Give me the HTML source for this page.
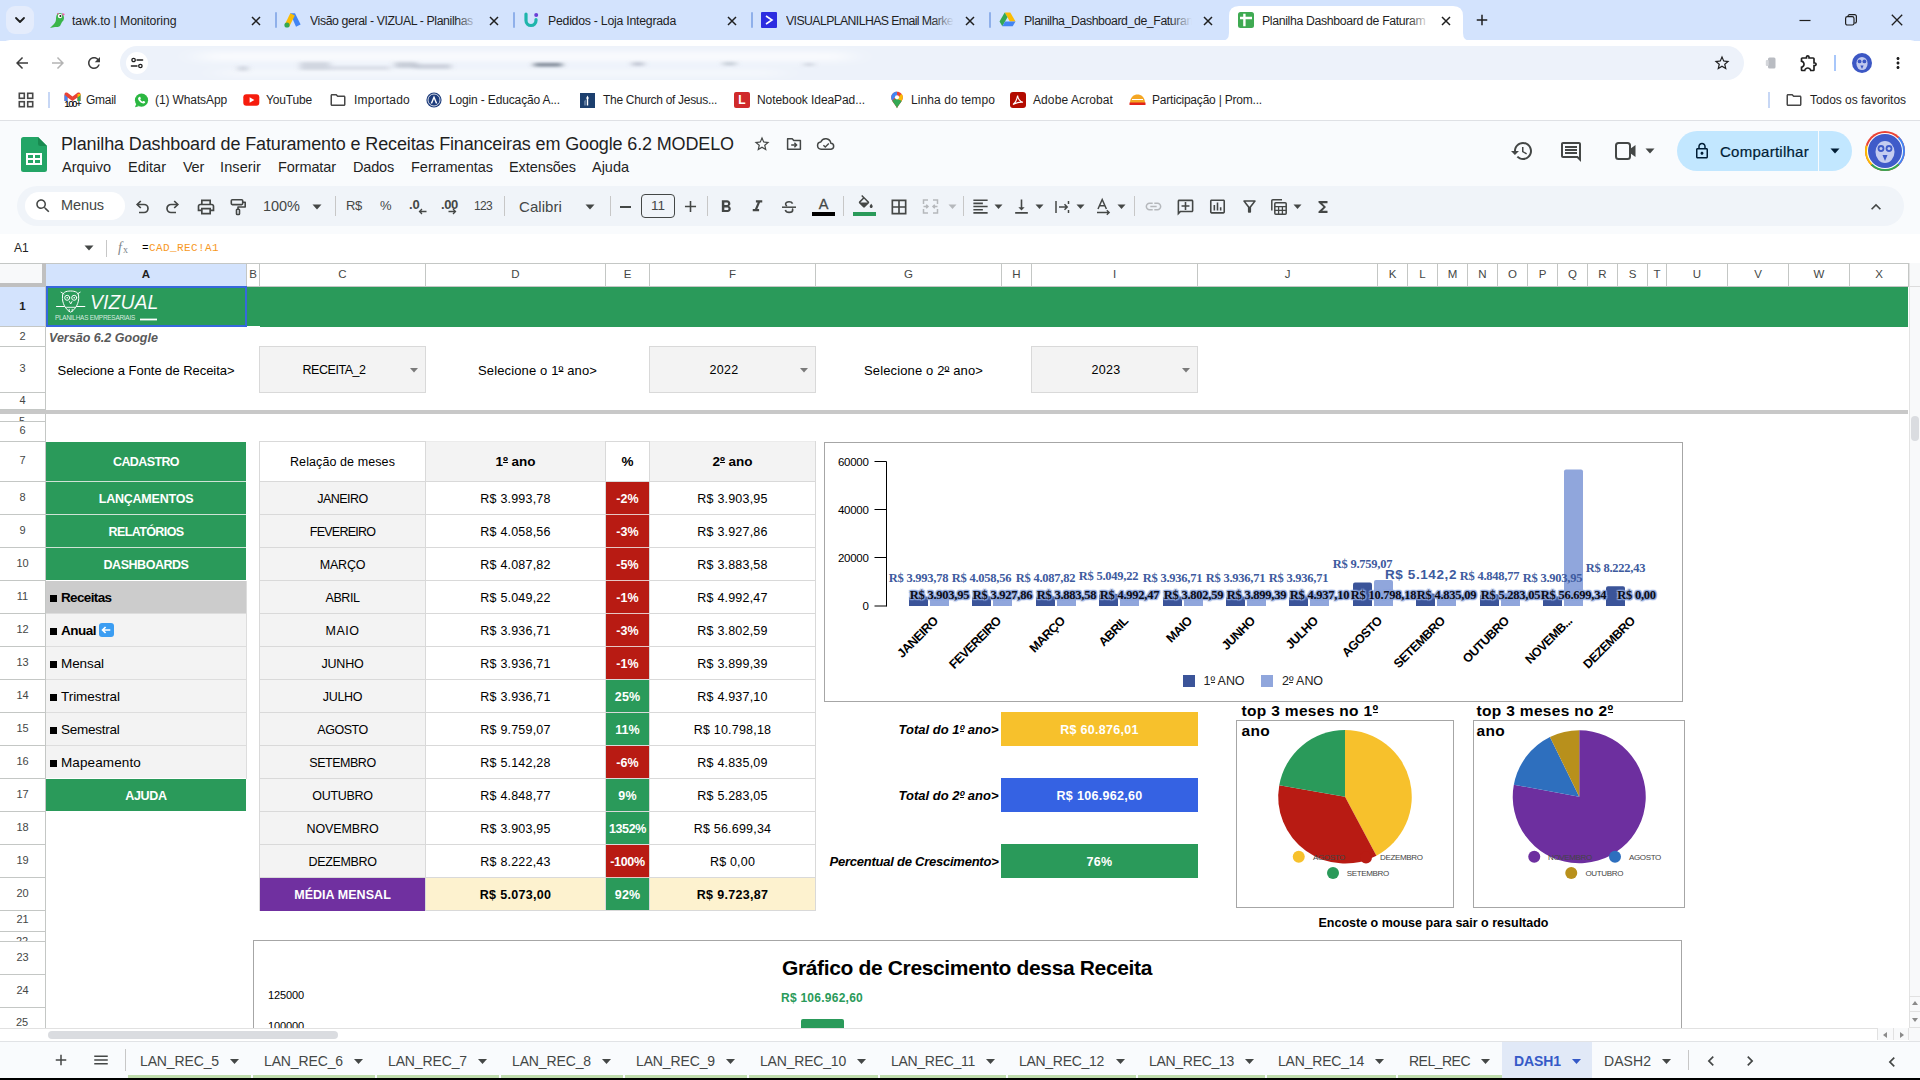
<!DOCTYPE html>
<html><head><meta charset="utf-8"><title>Planilha Dashboard</title><style>
html,body{margin:0;padding:0;}
body{width:1920px;height:1080px;overflow:hidden;background:#fff;position:relative;font-family:"Liberation Sans",sans-serif;}
.a{position:absolute;box-sizing:border-box;overflow:hidden;}
.t{position:absolute;white-space:nowrap;}
svg.a{overflow:visible;}
</style></head><body>
<div class="a" style="left:0px;top:0px;width:1920px;height:41px;background:#d3e3fd;"></div>
<div class="a" style="left:0px;top:40px;width:1920px;height:80px;background:#ffffff;border-radius:10px 10px 0 0;"></div>
<div class="a" style="left:6px;top:6px;width:28px;height:28px;background:#e4ecfc;border-radius:9px;"></div>
<svg class="a" style="left:13px;top:14px;" width="14" height="12" viewBox="0 0 14 12"><path d="M3 4 L7 8 L11 4" fill="none" stroke="#1f1f1f" stroke-width="1.8" stroke-linecap="round" stroke-linejoin="round"/></svg>
<svg class="a" style="left:1221px;top:6px;" width="250" height="35" viewBox="0 0 250 35"><path d="M0 35 Q8 35 8 27 L8 10 Q8 0 18 0 L232 0 Q242 0 242 10 L242 27 Q242 35 250 35 Z" fill="#ffffff"/></svg>
<div class="a" style="left:72px;top:8px;width:168px;height:26px;"><span class="t" style="left:0;top:6px;font:400 12.300px/15px 'Liberation Sans',sans-serif;letter-spacing:-0.1px;color:#1f1f1f">tawk.to | Monitoring</span></div>
<div class="a" style="left:218px;top:8px;width:22px;height:26px;background:linear-gradient(90deg,rgba(211,227,253,0),#d3e3fd);"></div>
<svg class="a" style="left:251px;top:15.5px;" width="10" height="10" viewBox="0 0 10 10"><path d="M1 1 L9 9 M9 1 L1 9" stroke="#1f1f1f" stroke-width="1.500" fill="none"/></svg>
<div class="a" style="left:275px;top:12px;width:1.5px;height:16px;background:#8fb0ea;border-radius:1px;"></div>
<div class="a" style="left:310px;top:8px;width:168px;height:26px;"><span class="t" style="left:0;top:6px;font:400 12.300px/15px 'Liberation Sans',sans-serif;letter-spacing:-0.4px;color:#1f1f1f">Visão geral - VIZUAL - Planilhas</span></div>
<div class="a" style="left:456px;top:8px;width:22px;height:26px;background:linear-gradient(90deg,rgba(211,227,253,0),#d3e3fd);"></div>
<svg class="a" style="left:489px;top:15.5px;" width="10" height="10" viewBox="0 0 10 10"><path d="M1 1 L9 9 M9 1 L1 9" stroke="#1f1f1f" stroke-width="1.500" fill="none"/></svg>
<div class="a" style="left:513px;top:12px;width:1.5px;height:16px;background:#8fb0ea;border-radius:1px;"></div>
<div class="a" style="left:548px;top:8px;width:168px;height:26px;"><span class="t" style="left:0;top:6px;font:400 12.300px/15px 'Liberation Sans',sans-serif;letter-spacing:-0.25px;color:#1f1f1f">Pedidos - Loja Integrada</span></div>
<div class="a" style="left:694px;top:8px;width:22px;height:26px;background:linear-gradient(90deg,rgba(211,227,253,0),#d3e3fd);"></div>
<svg class="a" style="left:727px;top:15.5px;" width="10" height="10" viewBox="0 0 10 10"><path d="M1 1 L9 9 M9 1 L1 9" stroke="#1f1f1f" stroke-width="1.500" fill="none"/></svg>
<div class="a" style="left:751px;top:12px;width:1.5px;height:16px;background:#8fb0ea;border-radius:1px;"></div>
<div class="a" style="left:786px;top:8px;width:168px;height:26px;"><span class="t" style="left:0;top:6px;font:400 12.300px/15px 'Liberation Sans',sans-serif;letter-spacing:-0.6px;color:#1f1f1f">VISUALPLANILHAS Email Marke</span></div>
<div class="a" style="left:932px;top:8px;width:22px;height:26px;background:linear-gradient(90deg,rgba(211,227,253,0),#d3e3fd);"></div>
<svg class="a" style="left:965px;top:15.5px;" width="10" height="10" viewBox="0 0 10 10"><path d="M1 1 L9 9 M9 1 L1 9" stroke="#1f1f1f" stroke-width="1.500" fill="none"/></svg>
<div class="a" style="left:989px;top:12px;width:1.5px;height:16px;background:#8fb0ea;border-radius:1px;"></div>
<div class="a" style="left:1024px;top:8px;width:168px;height:26px;"><span class="t" style="left:0;top:6px;font:400 12.300px/15px 'Liberation Sans',sans-serif;letter-spacing:-0.4px;color:#1f1f1f">Planilha_Dashboard_de_Faturan</span></div>
<div class="a" style="left:1170px;top:8px;width:22px;height:26px;background:linear-gradient(90deg,rgba(211,227,253,0),#d3e3fd);"></div>
<svg class="a" style="left:1203px;top:15.5px;" width="10" height="10" viewBox="0 0 10 10"><path d="M1 1 L9 9 M9 1 L1 9" stroke="#1f1f1f" stroke-width="1.500" fill="none"/></svg>
<div class="a" style="left:1262px;top:8px;width:168px;height:26px;"><span class="t" style="left:0;top:6px;font:400 12.300px/15px 'Liberation Sans',sans-serif;letter-spacing:-0.35px;color:#1f1f1f">Planilha Dashboard de Faturam</span></div>
<div class="a" style="left:1408px;top:8px;width:22px;height:26px;background:linear-gradient(90deg,rgba(255,255,255,0),#ffffff);"></div>
<svg class="a" style="left:1441px;top:15.5px;" width="10" height="10" viewBox="0 0 10 10"><path d="M1 1 L9 9 M9 1 L1 9" stroke="#1f1f1f" stroke-width="1.500" fill="none"/></svg>
<svg class="a" style="left:1472.5px;top:11.0px;" width="18" height="18" viewBox="0 0 24 24"><path d="M19 13h-6v6h-2v-6H5v-2h6V5h2v6h6v2z" fill="#1f1f1f" /></svg>
<svg class="a" style="left:48px;top:11px;" width="18" height="18" viewBox="0 0 18 18"><path d="M11 2c3 0 5 2 5 5 0 2-1 3-2 4l-2 4c-1 1-3 1-5 1l-5 1 4-4c1-1 2-3 2-5 0-3 1-6 3-6z" fill="#3ab54a"/><circle cx="12" cy="5" r="2.2" fill="#fff"/><circle cx="12.4" cy="5" r="1" fill="#222"/><path d="M14 2l3 1-2 2z" fill="#ef5ba1"/><path d="M9 2l2 0-1 2z" fill="#ef5ba1"/></svg>
<svg class="a" style="left:284px;top:12px;" width="18" height="16" viewBox="0 0 18 16"><path d="M6.2 1.2 L11 1.2 L16.6 12.6 L12 14.8 Z" fill="#4285f4"/><path d="M6.3 1.3 L10.8 3.4 L5.2 14.8 L0.8 12.4 Z" fill="#fbbc04"/><circle cx="3" cy="13" r="2.6" fill="#34a853"/></svg>
<svg class="a" style="left:523px;top:12px;" width="16" height="16" viewBox="0 0 16 16"><path d="M3 2 v6.5 a5 5 0 0 0 10 0 v-1" fill="none" stroke="#1fb5ac" stroke-width="3.2" stroke-linecap="round"/><circle cx="13.2" cy="3" r="2" fill="#6a3fd6"/></svg>
<div class="a" style="left:761px;top:12px;width:16px;height:16px;background:#2d2de0;border-radius:1px;"></div>
<svg class="a" style="left:761px;top:12px;" width="16" height="16" viewBox="0 0 16 16"><path d="M5 4 L11 8 L5 12" fill="none" stroke="#fff" stroke-width="1.6"/></svg>
<svg class="a" style="left:999px;top:12px;" width="17" height="15" viewBox="0 0 17 15"><path d="M5.7 0.5 h5.6 l5.2 9 h-5.6z" fill="#fbbc04"/><path d="M5.7 0.5 L0.5 9.5 l2.8 4.8 L8.5 5.3z" fill="#34a853"/><path d="M3.3 14.3 h10.4 l2.8-4.8 H6.1z" fill="#4285f4"/><path d="M11.3 0.5 L8.5 5.3 l2.4 4.2 h5.6z" fill="#ea4335" opacity=".0"/></svg>
<div class="a" style="left:1238px;top:12px;width:16px;height:16px;background:#3faa52;border-radius:2.500px;"></div>
<svg class="a" style="left:1238px;top:12px;" width="16" height="16" viewBox="0 0 16 16"><path d="M2 6 H14 M6.400 1.800 V14.200" fill="none" stroke="#fff" stroke-width="2.400"/></svg>
<svg class="a" style="left:1799px;top:14px;" width="12" height="12" viewBox="0 0 12 12"><path d="M0.5 6.5h11" stroke="#1f1f1f" stroke-width="1.2"/></svg>
<svg class="a" style="left:1845px;top:14px;" width="12" height="12" viewBox="0 0 12 12"><rect x="0.6" y="2.6" width="8.4" height="8.4" rx="1.8" fill="none" stroke="#1f1f1f" stroke-width="1.2"/><path d="M3 2.4 V2.2 a1.6 1.6 0 0 1 1.6-1.6 H9.6 a1.8 1.8 0 0 1 1.8 1.8 V7.6 a1.6 1.6 0 0 1-1.6 1.6 H9.4" fill="none" stroke="#1f1f1f" stroke-width="1.2"/></svg>
<svg class="a" style="left:1891px;top:14px;" width="12" height="12" viewBox="0 0 12 12"><path d="M0.8 0.8 L11.2 11.2 M11.2 0.8 L0.8 11.2" stroke="#1f1f1f" stroke-width="1.3"/></svg>
<svg class="a" style="left:13.0px;top:54.0px;" width="18" height="18" viewBox="0 0 24 24"><path d="M20 11H7.83l5.59-5.59L12 4l-8 8 8 8 1.41-1.41L7.83 13H20v-2z" fill="#3c3c3c" /></svg>
<svg class="a" style="left:49.0px;top:54.0px;" width="18" height="18" viewBox="0 0 24 24"><path d="M12 4l-1.41 1.41L16.17 11H4v2h12.17l-5.58 5.59L12 20l8-8z" fill="#b4b4b4" /></svg>
<svg class="a" style="left:85.0px;top:54.0px;" width="18" height="18" viewBox="0 0 24 24"><path d="M17.65 6.35C16.2 4.9 14.21 4 12 4c-4.42 0-7.99 3.58-7.99 8s3.57 8 7.99 8c3.73 0 6.84-2.55 7.73-6h-2.08c-.82 2.33-3.04 4-5.65 4-3.31 0-6-2.69-6-6s2.69-6 6-6c1.66 0 3.14.69 4.22 1.78L13 11h7V4l-2.35 2.35z" fill="#3c3c3c" /></svg>
<div class="a" style="left:120px;top:46px;width:1624px;height:34px;background:#edf2fa;border-radius:17px;"></div>
<div class="a" style="left:126px;top:52px;width:22px;height:22px;background:#ffffff;border-radius:11px;"></div>
<svg class="a" style="left:130px;top:56px;" width="14" height="14" viewBox="0 0 14 14"><circle cx="3.6" cy="4" r="1.7" fill="none" stroke="#1f1f1f" stroke-width="1.3"/><path d="M7 4h5.6" stroke="#1f1f1f" stroke-width="1.4" stroke-linecap="round"/><circle cx="10.4" cy="10" r="1.7" fill="none" stroke="#1f1f1f" stroke-width="1.3"/><path d="M1.4 10h5.6" stroke="#1f1f1f" stroke-width="1.4" stroke-linecap="round"/></svg>
<svg class="a" style="left:160px;top:50px;" width="1000" height="28" viewBox="0 0 1000 28"><defs><filter id="bl" x="-5%" y="-80%" width="110%" height="260%"><feGaussianBlur stdDeviation="3 1.600"/></filter><filter id="bl2" x="-5%" y="-80%" width="110%" height="260%"><feGaussianBlur stdDeviation="14 3"/></filter></defs><g filter="url(#bl2)" fill="#ffffff"><rect x="40" y="2" width="650" height="9" opacity=".75"/><rect x="60" y="20" width="560" height="6" opacity=".55"/></g><g filter="url(#bl)" fill="#8b93a3"><rect x="78" y="16" width="10" height="5" opacity=".30"/><rect x="140" y="12" width="30" height="8" opacity=".30"/><rect x="170" y="16" width="60" height="4" opacity=".22"/><rect x="235" y="12" width="22" height="6" opacity=".40"/><rect x="255" y="14" width="36" height="5" opacity=".35"/><rect x="374" y="13" width="28" height="3.500" fill="#5b6675" opacity=".8"/><rect x="472" y="12" width="12" height="4" opacity=".45"/><rect x="563" y="12" width="13" height="3.500" opacity=".42"/><rect x="644" y="13" width="10" height="3" opacity=".32"/></g></svg>
<svg class="a" style="left:1712.5px;top:54.0px;" width="18" height="18" viewBox="0 0 24 24"><path d="M22 9.24l-7.19-.62L12 2 9.19 8.63 2 9.24l5.46 4.73L5.82 21 12 17.27 18.18 21l-1.63-7.03L22 9.24zM12 15.4l-3.76 2.27 1-4.28-3.32-2.88 4.38-.38L12 6.1l1.71 4.04 4.38.38-3.32 2.88 1 4.28L12 15.4z" fill="#1f1f1f" /></svg>
<svg class="a" style="left:1765px;top:56px;" width="12" height="14" viewBox="0 0 12 14"><rect x="3" y="1.5" width="7.5" height="11" rx="1.5" fill="#b9bcc2"/><rect x="0.8" y="4" width="3" height="6" rx="1" fill="#d4d6da"/></svg>
<svg class="a" style="left:1798.5px;top:53.0px;" width="20" height="20" viewBox="0 0 24 24"><path d="M10.5 4.5c.28 0 .5.22.5.5v2h6v6h2c.28 0 .5.22.5.5s-.22.5-.5.5h-2v6h-2.12c-.68-1.75-2.39-3-4.38-3s-3.7 1.25-4.38 3H4v-2.12c1.75-.68 3-2.39 3-4.38 0-1.99-1.24-3.7-2.99-4.38L4 7h6V5c0-.28.22-.5.5-.5m0-2C9.12 2.5 8 3.62 8 5H4c-1.1 0-1.99.9-1.99 2v3.8h.29c1.49 0 2.7 1.21 2.7 2.7s-1.21 2.7-2.7 2.7H2V20c0 1.1.9 2 2 2h3.8v-.3c0-1.49 1.21-2.7 2.7-2.7s2.7 1.21 2.7 2.7v.3H17c1.1 0 2-.9 2-2v-4c1.38 0 2.5-1.12 2.5-2.5S20.38 11 19 11V7c0-1.1-.9-2-2-2h-4c0-1.38-1.12-2.5-2.5-2.5z" fill="#1f1f1f" /></svg>
<div class="a" style="left:1834px;top:55px;width:1.5px;height:16px;background:#a8c7fa;"></div>
<svg class="a" style="left:1852px;top:53px;" width="20" height="20" viewBox="0 0 20 20"><circle cx="10" cy="10" r="10" fill="#3c57c4"/><ellipse cx="10" cy="10.5" rx="5.6" ry="6.6" fill="#cfd6f3" opacity=".9"/><circle cx="7.6" cy="8.4" r="1.9" fill="#3c57c4"/><circle cx="12.4" cy="8.4" r="1.9" fill="#3c57c4"/><path d="M8.4 12.5 L10 16 L11.6 12.5z" fill="#3c57c4"/></svg>
<svg class="a" style="left:1888.5px;top:54.0px;" width="18" height="18" viewBox="0 0 24 24"><path d="M12 8c1.1 0 2-.9 2-2s-.9-2-2-2-2 .9-2 2 .9 2 2 2zm0 2c-1.1 0-2 .9-2 2s.9 2 2 2 2-.9 2-2-.9-2-2-2zm0 6c-1.1 0-2 .9-2 2s.9 2 2 2 2-.9 2-2-.9-2-2-2z" fill="#1f1f1f" /></svg>
<svg class="a" style="left:18px;top:92px;" width="16" height="16" viewBox="0 0 16 16"><g fill="none" stroke="#474747" stroke-width="1.6"><rect x="1.3" y="1.3" width="5" height="5"/><rect x="9.7" y="1.3" width="5" height="5"/><rect x="1.3" y="9.7" width="5" height="5"/><rect x="9.7" y="9.7" width="5" height="5"/></g></svg>
<div class="a" style="left:48px;top:92px;width:1.5px;height:16px;background:#c7d7f5;"></div>
<svg class="a" style="left:64px;top:92px;" width="17" height="15" viewBox="0 0 17 15"><path d="M0.5 2.2v8.6h3V5.6L8.5 9l5-3.4v5.2h3V2.2c0-1.6-1.8-2.3-3-1.4L8.5 4.4 3.5 0.8C2.3-.1 0.5 .6 0.5 2.2z" fill="#ea4335"/><path d="M0.5 2.4v8.4h3V5.6z" fill="#4285f4"/><path d="M16.5 2.4v8.4h-3V5.6z" fill="#34a853"/><path d="M13.5 2.1 l3-.4v1.5l-3 2.4z" fill="#fbbc04"/></svg>
<div class="a" style="left:64px;top:100.5px;width:17px;height:8px;background:#ffffff;"></div>
<span class="t" style="top:99.10px;font:400 9px/10.80px 'Liberation Sans',sans-serif;color:#000;left:64.5px;letter-spacing:-1.100px;-webkit-text-stroke:0.200px #000;">100+</span>
<span class="t" id="t2" style="top:92.80px;font:400 12px/14.40px 'Liberation Sans',sans-serif;color:#1f1f1f;left:86px;letter-spacing:-0.269px;">Gmail</span>
<svg class="a" style="left:134px;top:93px;" width="15" height="15" viewBox="0 0 15 15"><circle cx="7.5" cy="7.2" r="6.6" fill="#2bb741"/><path d="M1 14.3l1.3-3.6 2.4 2.5z" fill="#2bb741"/><path d="M5.2 3.9c.4-.4.9-.3 1.1.2l.5 1.1c.1.3 0 .6-.2.8l-.4.4c.5 1 1.300 1.800 2.300 2.300l.4-.4c.2-.2.5-.3.8-.2l1.100.5c.5.2.6.7.2 1.100-.8.9-1.900 1-3.300.3-1.500-.8-2.700-2-3.300-3.300-.6-1.200-.4-2.200.8-2.800z" fill="#fff"/></svg>
<span class="t" id="t3" style="top:92.80px;font:400 12px/14.40px 'Liberation Sans',sans-serif;color:#1f1f1f;left:155px;letter-spacing:-0.113px;">(1) WhatsApp</span>
<svg class="a" style="left:243px;top:94px;" width="17" height="12" viewBox="0 0 17 12"><rect x="0.3" y="0.3" width="16" height="11.4" rx="3" fill="#f61c0d" stroke="none"/><path d="M6.6 3.2v5.6L11.4 6z" fill="#fff"/></svg>
<span class="t" id="t4" style="top:92.80px;font:400 12px/14.40px 'Liberation Sans',sans-serif;color:#1f1f1f;left:266px;letter-spacing:-0.165px;">YouTube</span>
<svg class="a" style="left:329.0px;top:91.0px;" width="18" height="18" viewBox="0 0 24 24"><path d="M9.17 6l2 2H20v10H4V6h5.17M10 4H4c-1.1 0-1.99.9-1.99 2L2 18c0 1.1.9 2 2 2h16c1.1 0 2-.9 2-2V8c0-1.1-.9-2-2-2h-8l-2-2z" fill="#474747" /></svg>
<span class="t" id="t5" style="top:92.80px;font:400 12px/14.40px 'Liberation Sans',sans-serif;color:#1f1f1f;left:354px;letter-spacing:0.219px;">Importado</span>
<svg class="a" style="left:426px;top:92px;" width="16" height="16" viewBox="0 0 16 16"><circle cx="8" cy="8" r="7.6" fill="#1d3c7c"/><circle cx="8" cy="8" r="6" fill="none" stroke="#fff" stroke-width=".8"/><path d="M4.6 11.6 L8 3.6 L11.4 11.600 H9.800 L8 7 L6.200 11.600z" fill="#fff"/></svg>
<span class="t" id="t6" style="top:92.80px;font:400 12px/14.40px 'Liberation Sans',sans-serif;color:#1f1f1f;left:449px;letter-spacing:-0.147px;">Login - Educação A...</span>
<div class="a" style="left:580px;top:93px;width:15px;height:15px;background:#1c3f6e;"></div>
<svg class="a" style="left:580px;top:93px;" width="15" height="15" viewBox="0 0 15 15"><path d="M7.5 2.500 L9 5.500 H8.200 V12.500 H6.800 V5.500 H6z" fill="#fff"/><path d="M4.500 8 L5.500 6.500 V12.500 H4.500z" fill="#9fb3cc"/></svg>
<span class="t" id="t7" style="top:92.80px;font:400 12px/14.40px 'Liberation Sans',sans-serif;color:#1f1f1f;left:603px;letter-spacing:-0.306px;">The Church of Jesus...</span>
<div class="a" style="left:734px;top:92px;width:16px;height:16px;background:#d02a2a;border-radius:2px;"></div>
<span class="t" style="top:93.30px;font:700 12px/14.40px 'Liberation Sans',sans-serif;color:#fff;left:742px;transform:translateX(-50%);">L</span>
<span class="t" id="t9" style="top:92.80px;font:400 12px/14.40px 'Liberation Sans',sans-serif;color:#1f1f1f;left:757px;letter-spacing:-0.075px;">Notebook IdeaPad...</span>
<svg class="a" style="left:890px;top:91px;" width="14" height="18" viewBox="0 0 14 18"><path d="M7 0.800 C3.600 0.800 1.200 3.300 1.200 6.400 c0 3.800 4.400 7.200 5.800 10.800 1.400-3.600 5.800-7 5.800-10.800 C12.800 3.300 10.400 0.800 7 0.800z" fill="#ea4335"/><path d="M7 0.800 C3.600 0.800 1.200 3.300 1.200 6.400 c0 1.200 .4 2.300 1 3.400 L7 4z" fill="#4285f4"/><path d="M2.200 9.800 c1.300 2.400 3.900 4.800 4.800 7.400 1-2.600 3.400-4.700 4.800-7.400 L9.600 5.400z" fill="#34a853"/><path d="M11.800 9.800 c.6-1.100 1-2.200 1-3.400 0-1.400-.5-2.700-1.300-3.600 L7 8z" fill="#fbbc04"/><circle cx="7" cy="6.300" r="2.100" fill="#fff"/></svg>
<span class="t" id="t10" style="top:92.80px;font:400 12px/14.40px 'Liberation Sans',sans-serif;color:#1f1f1f;left:911px;letter-spacing:0.090px;">Linha do tempo</span>
<div class="a" style="left:1010px;top:92px;width:16px;height:16px;background:#b30b00;border-radius:3px;"></div>
<svg class="a" style="left:1010px;top:92px;" width="16" height="16" viewBox="0 0 16 16"><path d="M3 12.500 C5 11 7 7 7.600 3.600 C8 6.500 10 9.500 13 10.200 C9.500 10 5.500 11.200 3 12.500z" fill="none" stroke="#fff" stroke-width="1.100"/></svg>
<span class="t" id="t11" style="top:92.80px;font:400 12px/14.40px 'Liberation Sans',sans-serif;color:#1f1f1f;left:1033px;letter-spacing:0.097px;">Adobe Acrobat</span>
<svg class="a" style="left:1129px;top:93px;" width="17" height="14" viewBox="0 0 17 14"><path d="M1 10 C1 4 5 1.500 8.500 1.500 S16 4 16 10z" fill="#f4a623"/><path d="M0.500 9.500 h16 v2.500 h-16z" fill="#e2231a"/><path d="M3 6.500h11" stroke="#fff" stroke-width="1"/></svg>
<span class="t" id="t12" style="top:92.80px;font:400 12px/14.40px 'Liberation Sans',sans-serif;color:#1f1f1f;left:1152px;letter-spacing:-0.205px;">Participação | Prom...</span>
<div class="a" style="left:1768px;top:92px;width:1.5px;height:16px;background:#c7d7f5;"></div>
<svg class="a" style="left:1784.5px;top:91.0px;" width="18" height="18" viewBox="0 0 24 24"><path d="M9.17 6l2 2H20v10H4V6h5.17M10 4H4c-1.1 0-1.99.9-1.99 2L2 18c0 1.1.9 2 2 2h16c1.1 0 2-.9 2-2V8c0-1.1-.9-2-2-2h-8l-2-2z" fill="#474747" /></svg>
<span class="t" id="t13" style="top:92.80px;font:400 12px/14.40px 'Liberation Sans',sans-serif;color:#1f1f1f;left:1810px;letter-spacing:-0.040px;">Todos os favoritos</span>
<div class="a" style="left:0px;top:120px;width:1920px;height:1px;background:#dfe1e5;"></div>
<div class="a" style="left:0px;top:121px;width:1920px;height:113px;background:#f9fbfd;"></div>
<svg class="a" style="left:21px;top:137px;" width="26" height="35" viewBox="0 0 26 35"><path d="M2.500 0 H17 L26 9 V32.500 A2.500 2.500 0 0 1 23.500 35 H2.500 A2.500 2.500 0 0 1 0 32.500 V2.500 A2.500 2.500 0 0 1 2.500 0z" fill="#23a566"/><path d="M17 0 L26 9 H19.500 A2.500 2.500 0 0 1 17 6.500z" fill="#188a50"/><path d="M5 16 h16 v12 h-16z M7 18 v3 h5 v-3z M14 18 v3 h5 v-3z M7 23 v3 h5 v-3z M14 23 v3 h5 v-3z" fill="#fff" fill-rule="evenodd"/></svg>
<span class="t" id="t14" style="top:134.20px;font:400 18px/21.60px 'Liberation Sans',sans-serif;color:#1f1f1f;left:61px;letter-spacing:-0.135px;">Planilha Dashboard de Faturamento e Receitas Financeiras em Google 6.2 MODELO</span>
<svg class="a" style="left:753.0px;top:134.5px;" width="18" height="18" viewBox="0 0 24 24"><path d="M22 9.24l-7.19-.62L12 2 9.19 8.63 2 9.24l5.46 4.73L5.82 21 12 17.27 18.18 21l-1.63-7.03L22 9.24zM12 15.4l-3.76 2.27 1-4.28-3.32-2.88 4.38-.38L12 6.1l1.71 4.04 4.38.38-3.32 2.88 1 4.28L12 15.4z" fill="#444746" /></svg>
<svg class="a" style="left:785px;top:135px;" width="18" height="18" viewBox="0 0 18 18"><path d="M2.600 3.800 h4.600 l1.600 1.800 h6.600 v8.600 h-12.800z" fill="none" stroke="#444746" stroke-width="1.500" stroke-linejoin="round"/><path d="M6.200 10 h5 M9.400 7.800 l2.200 2.200 -2.200 2.200" fill="none" stroke="#444746" stroke-width="1.400"/></svg>
<svg class="a" style="left:816px;top:135px;" width="20" height="18" viewBox="0 0 20 18"><path d="M5.200 14.200 a3.600 3.600 0 0 1 -.4 -7.180 a5.200 5.200 0 0 1 10 1.200 a3 3 0 0 1 .2 5.980z" fill="none" stroke="#444746" stroke-width="1.500" stroke-linejoin="round"/><path d="M7.400 10.200 l1.900 1.900 3.500 -3.500" fill="none" stroke="#444746" stroke-width="1.400"/></svg>
<span class="t" id="t15" style="top:159.10px;font:400 14.5px/17.40px 'Liberation Sans',sans-serif;color:#1f1f1f;left:62px;letter-spacing:-0.025px;">Arquivo</span>
<span class="t" id="t16" style="top:159.10px;font:400 14.5px/17.40px 'Liberation Sans',sans-serif;color:#1f1f1f;left:128px;letter-spacing:0.018px;">Editar</span>
<span class="t" id="t17" style="top:159.10px;font:400 14.5px/17.40px 'Liberation Sans',sans-serif;color:#1f1f1f;left:183px;letter-spacing:-0.255px;">Ver</span>
<span class="t" id="t18" style="top:159.10px;font:400 14.5px/17.40px 'Liberation Sans',sans-serif;color:#1f1f1f;left:220px;letter-spacing:0.100px;">Inserir</span>
<span class="t" id="t19" style="top:159.10px;font:400 14.5px/17.40px 'Liberation Sans',sans-serif;color:#1f1f1f;left:278px;letter-spacing:-0.104px;">Formatar</span>
<span class="t" id="t20" style="top:159.10px;font:400 14.5px/17.40px 'Liberation Sans',sans-serif;color:#1f1f1f;left:353px;letter-spacing:-0.184px;">Dados</span>
<span class="t" id="t21" style="top:159.10px;font:400 14.5px/17.40px 'Liberation Sans',sans-serif;color:#1f1f1f;left:411px;letter-spacing:-0.018px;">Ferramentas</span>
<span class="t" id="t22" style="top:159.10px;font:400 14.5px/17.40px 'Liberation Sans',sans-serif;color:#1f1f1f;left:509px;letter-spacing:-0.080px;">Extensões</span>
<span class="t" id="t23" style="top:159.10px;font:400 14.5px/17.40px 'Liberation Sans',sans-serif;color:#1f1f1f;left:592px;letter-spacing:-0.019px;">Ajuda</span>
<svg class="a" style="left:1509.5px;top:139.0px;" width="24" height="24" viewBox="0 0 24 24"><path d="M13 3c-4.97 0-9 4.03-9 9H1l3.890 3.890.070.140L9 12H6c0-3.870 3.130-7 7-7s7 3.130 7 7-3.130 7-7 7c-1.930 0-3.680-.790-4.940-2.060l-1.420 1.420C8.270 19.990 10.510 21 13 21c4.970 0 9-4.030 9-9s-4.030-9-9-9zm-1 5v5l4.280 2.540.720-1.210-3.500-2.080V8H12z" fill="#444746" /></svg>
<svg class="a" style="left:1559.0px;top:140.0px;" width="24" height="24" viewBox="0 0 24 24"><path d="M21.990 4c0-1.100-.890-2-1.990-2H4c-1.100 0-2 .9-2 2v12c0 1.100.9 2 2 2h14l4 4-.010-18zM20 4v13.170L18.830 16H4V4h16zM6 12h12v2H6zm0-3h12v2H6zm0-3h12v2H6z" fill="#444746" /></svg>
<svg class="a" style="left:1613px;top:139px;" width="26" height="24" viewBox="0 0 26 24"><path d="M3 6.500 a2.500 2.500 0 0 1 2.500-2.500 h9 a2.500 2.500 0 0 1 2.500 2.500 v11 a2.500 2.500 0 0 1 -2.500 2.500 h-9 a2.500 2.500 0 0 1 -2.500-2.500z" fill="none" stroke="#444746" stroke-width="2"/><path d="M17 10 l5.500-4 v12 l-5.500-4z" fill="#444746"/></svg>
<svg class="a" style="left:1645px;top:148px;" width="10" height="6" viewBox="0 0 10 6"><path d="M0.500 0.500 L5 5.500 L9.500 0.500z" fill="#444746"/></svg>
<div class="a" style="left:1677px;top:131px;width:175px;height:40px;background:#c2e7ff;border-radius:20px;"></div>
<div class="a" style="left:1818px;top:131px;width:1px;height:40px;background:#f9fbfd;"></div>
<svg class="a" style="left:1693.0px;top:141.5px;" width="18" height="18" viewBox="0 0 24 24"><path d="M18 8h-1V6c0-2.760-2.240-5-5-5S7 3.240 7 6v2H6c-1.100 0-2 .9-2 2v10c0 1.100.9 2 2 2h12c1.100 0 2-.9 2-2V10c0-1.100-.9-2-2-2zM9 6c0-1.660 1.340-3 3-3s3 1.340 3 3v2H9V6zm9 14H6V10h12v10zm-6-3c1.100 0 2-.9 2-2s-.9-2-2-2-2 .9-2 2 .9 2 2 2z" fill="#001d35" /></svg>
<span class="t" id="t24" style="top:143.00px;font:400 15px/18.00px 'Liberation Sans',sans-serif;color:#001d35;left:1720px;letter-spacing:0.260px;-webkit-text-stroke:0.200px #001d35;">Compartilhar</span>
<svg class="a" style="left:1830px;top:148px;" width="10" height="6" viewBox="0 0 10 6"><path d="M0.500 0.500 L5 5.500 L9.500 0.500z" fill="#001d35"/></svg>
<svg class="a" style="left:1865px;top:131px;" width="40" height="40" viewBox="0 0 40 40"><defs><clipPath id="avc"><circle cx="20" cy="20" r="20"/></clipPath></defs><g clip-path="url(#avc)"><rect width="40" height="40" fill="#ea4335"/><path d="M20 20 L40 0 V40z" fill="#4285f4"/><path d="M20 20 L0 40 H40z" fill="#34a853"/><path d="M20 20 L0 40 V14z" fill="#fbbc04"/></g><circle cx="20" cy="20" r="18" fill="#fff"/><circle cx="20" cy="20" r="17" fill="#3f5bc9"/><ellipse cx="20" cy="21" rx="9.500" ry="11" fill="#c5cdf0"/><circle cx="16" cy="17.500" r="3.400" fill="#3f5bc9"/><circle cx="24" cy="17.500" r="3.400" fill="#3f5bc9"/><circle cx="16" cy="17.500" r="1.500" fill="#c5cdf0"/><circle cx="24" cy="17.500" r="1.500" fill="#c5cdf0"/><path d="M17.500 24 L20 30 L22.500 24z" fill="#3f5bc9"/></svg>
<div class="a" style="left:17px;top:186px;width:1887px;height:40px;background:#f0f4f9;border-radius:20px;"></div>
<div class="a" style="left:25px;top:192px;width:100px;height:28px;background:#ffffff;border-radius:14px;"></div>
<svg class="a" style="left:33.5px;top:197.0px;" width="18" height="18" viewBox="0 0 24 24"><path d="M15.500 14h-.790l-.280-.270C15.410 12.590 16 11.110 16 9.500 16 5.910 13.090 3 9.500 3S3 5.910 3 9.500 5.910 16 9.500 16c1.610 0 3.090-.590 4.230-1.570l.270.280v.790l5 4.990L20.490 19l-4.990-5zm-6 0C7.010 14 5 11.990 5 9.500S7.010 5 9.500 5 14 7.010 14 9.500 11.990 14 9.500 14z" fill="#444746" /></svg>
<span class="t" id="t25" style="top:196.80px;font:400 14.5px/17.40px 'Liberation Sans',sans-serif;color:#444746;left:61px;letter-spacing:-0.106px;">Menus</span>
<svg class="a" style="left:133px;top:197px;" width="18" height="18" viewBox="0 0 18 18"><path d="M4.500 7.500 H11 a4 4 0 0 1 0 8 H6" fill="none" stroke="#444746" stroke-width="1.700"/><path d="M7.800 4 L4.200 7.500 L7.800 11" fill="none" stroke="#444746" stroke-width="1.700"/></svg>
<svg class="a" style="left:164px;top:197px;" width="18" height="18" viewBox="0 0 18 18"><path d="M13.500 7.500 H7 a4 4 0 0 0 0 8 H12" fill="none" stroke="#444746" stroke-width="1.700"/><path d="M10.200 4 L13.800 7.500 L10.200 11" fill="none" stroke="#444746" stroke-width="1.700"/></svg>
<svg class="a" style="left:195.5px;top:196.5px;" width="20" height="20" viewBox="0 0 24 24"><path d="M19 8h-1V3H6v5H5c-1.660 0-3 1.340-3 3v6h4v4h12v-4h4v-6c0-1.660-1.340-3-3-3zM8 5h8v3H8V5zm8 12v2H8v-4h8v2zm2-2v-2H6v2H4v-4c0-.550.450-1 1-1h14c.550 0 1 .450 1 1v4h-2z" fill="#444746" /></svg>
<svg class="a" style="left:227.5px;top:196.5px;" width="20" height="20" viewBox="0 0 20 20"><g fill="none" stroke="#444746" stroke-width="1.600" stroke-linejoin="round"><rect x="3.300" y="2.800" width="11.400" height="4.800" rx="1"/><path d="M14.700 5.200 H17.200 V10 H10 V12.300"/><rect x="8.500" y="12.300" width="3" height="5.200" rx="0.800"/></g></svg>
<span class="t" id="t26" style="top:198.30px;font:400 14.5px/17.40px 'Liberation Sans',sans-serif;color:#444746;left:263px;letter-spacing:-0.023px;">100%</span>
<svg class="a" style="left:312px;top:204px;" width="10" height="6" viewBox="0 0 10 6"><path d="M0.500 0.500 L5 5.500 L9.500 0.500z" fill="#444746"/></svg>
<div class="a" style="left:334.5px;top:196px;width:1px;height:20px;background:#c7c7c7;"></div>
<span class="t" id="t27" style="top:198.20px;font:400 13px/15.60px 'Liberation Sans',sans-serif;color:#444746;left:346px;letter-spacing:-0.312px;">R$</span>
<span class="t" style="top:198.20px;font:400 13px/15.60px 'Liberation Sans',sans-serif;color:#444746;left:380px;">%</span>
<span class="t" style="top:196.70px;font:700 13px/15.60px 'Liberation Sans',sans-serif;color:#444746;left:409px;">.0</span>
<svg class="a" style="left:418px;top:208px;" width="9" height="7" viewBox="0 0 9 7"><path d="M8.500 3.500 H1.500 M4 1 L1.500 3.500 L4 6" fill="none" stroke="#444746" stroke-width="1.300"/></svg>
<span class="t" id="t30" style="top:196.70px;font:700 13px/15.60px 'Liberation Sans',sans-serif;color:#444746;left:441px;letter-spacing:-0.359px;">.00</span>
<svg class="a" style="left:448px;top:208px;" width="9" height="7" viewBox="0 0 9 7"><path d="M0.500 3.500 H7.500 M5 1 L7.500 3.500 L5 6" fill="none" stroke="#444746" stroke-width="1.300"/></svg>
<span class="t" id="t31" style="top:199.30px;font:400 12px/14.40px 'Liberation Sans',sans-serif;color:#444746;left:474px;letter-spacing:-0.677px;">123</span>
<div class="a" style="left:503.5px;top:196px;width:1px;height:20px;background:#c7c7c7;"></div>
<span class="t" id="t32" style="top:197.50px;font:400 15px/18.00px 'Liberation Sans',sans-serif;color:#444746;left:519px;letter-spacing:0.069px;">Calibri</span>
<svg class="a" style="left:585px;top:204px;" width="10" height="6" viewBox="0 0 10 6"><path d="M0.500 0.500 L5 5.500 L9.500 0.500z" fill="#444746"/></svg>
<div class="a" style="left:609.5px;top:196px;width:1px;height:20px;background:#c7c7c7;"></div>
<div class="a" style="left:620px;top:206px;width:11px;height:1.6px;background:#444746;"></div>
<div class="a" style="left:641px;top:194px;width:34px;height:24px;border:1px solid #444746;border-radius:4px;"></div>
<span class="t" style="top:198.40px;font:400 13.5px/16.20px 'Liberation Sans',sans-serif;color:#444746;left:658px;transform:translateX(-50%);">11</span>
<svg class="a" style="left:680.5px;top:197.0px;" width="19" height="19" viewBox="0 0 24 24"><path d="M19 13h-6v6h-2v-6H5v-2h6V5h2v6h6v2z" fill="#444746" /></svg>
<div class="a" style="left:706.5px;top:196px;width:1px;height:20px;background:#c7c7c7;"></div>
<svg class="a" style="left:715.5px;top:196.5px;" width="20" height="20" viewBox="0 0 24 24"><path d="M15.600 10.790c.970-.670 1.650-1.770 1.650-2.790 0-2.260-1.750-4-4-4H7v14h7.040c2.090 0 3.710-1.700 3.710-3.790 0-1.520-.860-2.820-2.150-3.420zM10 6.500h3c.830 0 1.500.670 1.500 1.500s-.670 1.500-1.500 1.500h-3v-3zm3.500 9H10v-3h3.500c.830 0 1.500.670 1.500 1.500s-.670 1.500-1.500 1.500z" fill="#444746" /></svg>
<svg class="a" style="left:748.0px;top:197.0px;" width="19" height="19" viewBox="0 0 24 24"><path d="M10 4v3h2.210l-3.420 8H6v3h8v-3h-2.210l3.420-8H18V4z" fill="#444746" /></svg>
<svg class="a" style="left:780px;top:198px;" width="18" height="18" viewBox="0 0 18 18"><path d="M12.600 5.600 C12 4.300 10.600 3.700 9 3.700 C7.200 3.700 5.600 4.600 5.600 6.100 C5.600 7 6.100 7.600 7 8 M5.300 12 C5.800 13.600 7.300 14.400 9.100 14.400 C11.100 14.400 12.700 13.500 12.700 11.900 C12.700 11.300 12.500 10.900 12.200 10.600" fill="none" stroke="#444746" stroke-width="1.600"/><path d="M2 9.200 H16" stroke="#444746" stroke-width="1.500"/></svg>
<span class="t" style="top:195.60px;font:400 14.5px/17.40px 'Liberation Sans',sans-serif;color:#444746;left:823.5px;transform:translateX(-50%);-webkit-text-stroke:0.3px #444746;">A</span>
<div class="a" style="left:812px;top:212px;width:23px;height:3.7px;background:#000000;"></div>
<div class="a" style="left:842.5px;top:196px;width:1px;height:20px;background:#c7c7c7;"></div>
<svg class="a" style="left:856px;top:194px;" width="20" height="17" viewBox="0 0 20 17"><path d="M12.800 7.600 L6.200 1 5.200 2 6.900 3.800 3.100 7.600 c-.45.450-.45 1.150 0 1.600 l4.100 4.100 c.220.220.500.330.800.330 s.570-.110.800-.330 l4.100-4.100 c.440-.440.440-1.140-.010-1.600z M4.400 8.400 L8 4.800 11.600 8.400z M15.200 9.800 s-1.500 1.630-1.500 2.630 c0 .830.670 1.500 1.500 1.500 s1.500-.670 1.500-1.500 c0-1-1.500-2.630-1.500-2.630z" fill="#444746"/></svg>
<div class="a" style="left:853px;top:212px;width:23px;height:3.7px;background:#2a9a5a;"></div>
<svg class="a" style="left:888.5px;top:196.5px;" width="20" height="20" viewBox="0 0 24 24"><path d="M3 3v18h18V3H3zm8 16H5v-6h6v6zm0-8H5V5h6v6zm8 8h-6v-6h6v6zm0-8h-6V5h6v6z" fill="#444746" /></svg>
<svg class="a" style="left:921px;top:197px;" width="19" height="19" viewBox="0 0 19 19"><g fill="none" stroke="#b5b8bc" stroke-width="1.500"><path d="M2.500 7 V3 H7 M12 3 H16.500 V7 M16.500 12 V16 H12 M7 16 H2.500 V12"/><path d="M2.500 9.500 H7 M5.200 7.700 L7 9.500 5.200 11.300 M16.500 9.500 H12 M13.800 7.700 L12 9.500 13.800 11.300"/></g></svg>
<svg class="a" style="left:948px;top:204px;" width="9" height="6" viewBox="0 0 9 6"><path d="M0.500 0.500 L4.500 5 L8.500 0.500z" fill="#b5b8bc"/></svg>
<div class="a" style="left:962.5px;top:196px;width:1px;height:20px;background:#c7c7c7;"></div>
<svg class="a" style="left:971.0px;top:197.0px;" width="19" height="19" viewBox="0 0 24 24"><path d="M15 15H3v2h12v-2zm0-8H3v2h12V7zM3 13h18v-2H3v2zm0 8h18v-2H3v2zM3 3v2h18V3H3z" fill="#444746" /></svg>
<svg class="a" style="left:994px;top:204px;" width="9" height="6" viewBox="0 0 9 6"><path d="M0.500 0.500 L4.500 5 L8.500 0.500z" fill="#444746"/></svg>
<svg class="a" style="left:1011.5px;top:197.0px;" width="19" height="19" viewBox="0 0 24 24"><path d="M16 13h-3V3h-2v10H8l4 4 4-4zM4 19v2h16v-2H4z" fill="#444746" /></svg>
<svg class="a" style="left:1035px;top:204px;" width="9" height="6" viewBox="0 0 9 6"><path d="M0.500 0.500 L4.500 5 L8.500 0.500z" fill="#444746"/></svg>
<svg class="a" style="left:1053px;top:198px;" width="18" height="18" viewBox="0 0 18 18"><path d="M3 3 V15 M15.500 3 V6 M15.500 12 V15" stroke="#444746" stroke-width="1.500"/><path d="M6 9 H14 M11.500 6.300 L14.200 9 11.500 11.700" fill="none" stroke="#444746" stroke-width="1.500"/></svg>
<svg class="a" style="left:1076px;top:204px;" width="9" height="6" viewBox="0 0 9 6"><path d="M0.500 0.500 L4.500 5 L8.500 0.500z" fill="#444746"/></svg>
<svg class="a" style="left:1094px;top:197px;" width="19" height="19" viewBox="0 0 19 19"><path d="M4 12 L8.200 2.500 L12.400 12 M5.600 8.800 H10.800" fill="none" stroke="#444746" stroke-width="1.500"/><path d="M3 15.500 H15 M12.800 13.300 L15.200 15.500 12.800 17.700" fill="none" stroke="#444746" stroke-width="1.300"/></svg>
<svg class="a" style="left:1117px;top:204px;" width="9" height="6" viewBox="0 0 9 6"><path d="M0.500 0.500 L4.500 5 L8.500 0.500z" fill="#444746"/></svg>
<div class="a" style="left:1133.5px;top:196px;width:1px;height:20px;background:#c7c7c7;"></div>
<svg class="a" style="left:1143.5px;top:197.0px;" width="19" height="19" viewBox="0 0 24 24"><path d="M3.900 12c0-1.710 1.390-3.100 3.100-3.100h4V7H7c-2.760 0-5 2.240-5 5s2.240 5 5 5h4v-1.900H7c-1.710 0-3.100-1.390-3.100-3.100zM8 13h8v-2H8v2zm9-6h-4v1.900h4c1.710 0 3.100 1.390 3.100 3.100s-1.390 3.100-3.100 3.100h-4V17h4c2.760 0 5-2.240 5-5s-2.240-5-5-5z" fill="#b5b8bc" /></svg>
<svg class="a" style="left:1175.5px;top:197.5px;" width="19" height="19" viewBox="0 0 24 24"><path d="M22 4c0-1.100-.9-2-2-2H4c-1.100 0-2 .9-2 2v12c0 1.100.9 2 2 2h14l4 4V4zm-2 13.170L18.830 16H4V4h16v13.170zM13 5h-2v4H7v2h4v4h2v-4h4V9h-4z" fill="#444746" transform="translate(24 0) scale(-1 1)"/></svg>
<svg class="a" style="left:1207.5px;top:197.0px;" width="19" height="19" viewBox="0 0 24 24"><path d="M9 17H7v-7h2v7zm4 0h-2V7h2v10zm4 0h-2v-4h2v4zm2.500 2.100h-15V5h15v14.100zm0-16.100h-15c-1.100 0-2 .9-2 2v14c0 1.100.9 2 2 2h15c1.100 0 2-.9 2-2V5c0-1.100-.9-2-2-2z" fill="#444746" /></svg>
<svg class="a" style="left:1239.5px;top:197.0px;" width="19" height="19" viewBox="0 0 24 24"><path d="M7 6h10l-5.010 6.300L7 6zm-2.750-.390C6.270 8.200 10 13 10 13v6c0 .550.450 1 1 1h2c.550 0 1-.450 1-1v-6s3.720-4.800 5.740-7.390c.510-.660.040-1.610-.790-1.610H5.040c-.830 0-1.300.950-.790 1.610z" fill="#444746" /></svg>
<svg class="a" style="left:1269px;top:197px;" width="20" height="20" viewBox="0 0 20 20"><path d="M2.800 13.500 V3.800 a1 1 0 0 1 1-1 H13" fill="none" stroke="#444746" stroke-width="1.500"/><rect x="5.800" y="5.800" width="11.400" height="11.400" rx="1" fill="none" stroke="#444746" stroke-width="1.500"/><path d="M5.800 9.600 H17.200 M5.800 13.400 H17.200 M9.600 9.600 V17.200 M13.400 9.600 V17.200" stroke="#444746" stroke-width="1.300"/></svg>
<svg class="a" style="left:1293px;top:204px;" width="9" height="6" viewBox="0 0 9 6"><path d="M0.500 0.500 L4.500 5 L8.500 0.500z" fill="#444746"/></svg>
<svg class="a" style="left:1314.0px;top:197.5px;" width="18" height="18" viewBox="0 0 24 24"><path d="M18 4H6v2l6.500 6L6 18v2h12v-3h-7l5-5-5-5h7z" fill="#444746" /></svg>
<svg class="a" style="left:1866.0px;top:197.0px;" width="20" height="20" viewBox="0 0 24 24"><path d="M12 8l-6 6 1.410 1.410L12 10.830l4.590 4.580L18 14z" fill="#444746" /></svg>
<div class="a" style="left:0px;top:234px;width:1920px;height:29px;background:#ffffff;"></div>
<span class="t" style="top:241.10px;font:400 12px/14.40px 'Liberation Sans',sans-serif;color:#1f1f1f;left:14px;">A1</span>
<svg class="a" style="left:84px;top:245px;" width="10" height="6" viewBox="0 0 10 6"><path d="M0.500 0.500 L5 5.500 L9.500 0.500z" fill="#444746"/></svg>
<div class="a" style="left:106px;top:240px;width:1px;height:17px;background:#c7c7c7;"></div>
<span class="t" style="top:239.60px;font:400 14px/16.80px 'Liberation Serif',serif;color:#80868b;left:118px;"><i>f</i><span style="font-size:10px;margin-left:1px;position:relative;top:1px">x</span></span>
<span class="t" style="top:241.70px;font:400 11px/13.20px 'Liberation Mono',monospace;color:#000;left:142px;letter-spacing:0.400px;">=<span style="color:#f7981d">CAD_REC!A1</span></span>
<div class="a" style="left:0px;top:263px;width:1920px;height:778px;background:#ffffff;"></div>
<div class="a" style="left:0px;top:263px;width:1909px;height:24px;background:#ffffff;"></div>
<div class="a" style="left:46px;top:263px;width:201px;height:23px;background:#d3e3fd;"></div>
<div class="a" style="left:0px;top:263px;width:46px;height:24px;background:#f8f9fa;"></div>
<div class="a" style="left:0px;top:262.5px;width:1909px;height:1px;background:#c4c7c5;"></div>
<div class="a" style="left:246px;top:263px;width:1px;height:23px;background:#c4c7c5;"></div>
<span class="t" style="top:267.60px;font:700 11.5px/13.80px 'Liberation Sans',sans-serif;color:#1f1f1f;left:146.0px;transform:translateX(-50%);">A</span>
<div class="a" style="left:259px;top:263px;width:1px;height:23px;background:#c4c7c5;"></div>
<span class="t" style="top:267.60px;font:400 11.5px/13.80px 'Liberation Sans',sans-serif;color:#444746;left:253.0px;transform:translateX(-50%);">B</span>
<div class="a" style="left:425px;top:263px;width:1px;height:23px;background:#c4c7c5;"></div>
<span class="t" style="top:267.60px;font:400 11.5px/13.80px 'Liberation Sans',sans-serif;color:#444746;left:342.5px;transform:translateX(-50%);">C</span>
<div class="a" style="left:605px;top:263px;width:1px;height:23px;background:#c4c7c5;"></div>
<span class="t" style="top:267.60px;font:400 11.5px/13.80px 'Liberation Sans',sans-serif;color:#444746;left:515.5px;transform:translateX(-50%);">D</span>
<div class="a" style="left:649px;top:263px;width:1px;height:23px;background:#c4c7c5;"></div>
<span class="t" style="top:267.60px;font:400 11.5px/13.80px 'Liberation Sans',sans-serif;color:#444746;left:627.5px;transform:translateX(-50%);">E</span>
<div class="a" style="left:815px;top:263px;width:1px;height:23px;background:#c4c7c5;"></div>
<span class="t" style="top:267.60px;font:400 11.5px/13.80px 'Liberation Sans',sans-serif;color:#444746;left:732.5px;transform:translateX(-50%);">F</span>
<div class="a" style="left:1001px;top:263px;width:1px;height:23px;background:#c4c7c5;"></div>
<span class="t" style="top:267.60px;font:400 11.5px/13.80px 'Liberation Sans',sans-serif;color:#444746;left:908.5px;transform:translateX(-50%);">G</span>
<div class="a" style="left:1031px;top:263px;width:1px;height:23px;background:#c4c7c5;"></div>
<span class="t" style="top:267.60px;font:400 11.5px/13.80px 'Liberation Sans',sans-serif;color:#444746;left:1016.5px;transform:translateX(-50%);">H</span>
<div class="a" style="left:1197px;top:263px;width:1px;height:23px;background:#c4c7c5;"></div>
<span class="t" style="top:267.60px;font:400 11.5px/13.80px 'Liberation Sans',sans-serif;color:#444746;left:1114.5px;transform:translateX(-50%);">I</span>
<div class="a" style="left:1377px;top:263px;width:1px;height:23px;background:#c4c7c5;"></div>
<span class="t" style="top:267.60px;font:400 11.5px/13.80px 'Liberation Sans',sans-serif;color:#444746;left:1287.5px;transform:translateX(-50%);">J</span>
<div class="a" style="left:1407px;top:263px;width:1px;height:23px;background:#c4c7c5;"></div>
<span class="t" style="top:267.60px;font:400 11.5px/13.80px 'Liberation Sans',sans-serif;color:#444746;left:1392.5px;transform:translateX(-50%);">K</span>
<div class="a" style="left:1437px;top:263px;width:1px;height:23px;background:#c4c7c5;"></div>
<span class="t" style="top:267.60px;font:400 11.5px/13.80px 'Liberation Sans',sans-serif;color:#444746;left:1422.5px;transform:translateX(-50%);">L</span>
<div class="a" style="left:1467px;top:263px;width:1px;height:23px;background:#c4c7c5;"></div>
<span class="t" style="top:267.60px;font:400 11.5px/13.80px 'Liberation Sans',sans-serif;color:#444746;left:1452.5px;transform:translateX(-50%);">M</span>
<div class="a" style="left:1497px;top:263px;width:1px;height:23px;background:#c4c7c5;"></div>
<span class="t" style="top:267.60px;font:400 11.5px/13.80px 'Liberation Sans',sans-serif;color:#444746;left:1482.5px;transform:translateX(-50%);">N</span>
<div class="a" style="left:1527px;top:263px;width:1px;height:23px;background:#c4c7c5;"></div>
<span class="t" style="top:267.60px;font:400 11.5px/13.80px 'Liberation Sans',sans-serif;color:#444746;left:1512.5px;transform:translateX(-50%);">O</span>
<div class="a" style="left:1557px;top:263px;width:1px;height:23px;background:#c4c7c5;"></div>
<span class="t" style="top:267.60px;font:400 11.5px/13.80px 'Liberation Sans',sans-serif;color:#444746;left:1542.5px;transform:translateX(-50%);">P</span>
<div class="a" style="left:1587px;top:263px;width:1px;height:23px;background:#c4c7c5;"></div>
<span class="t" style="top:267.60px;font:400 11.5px/13.80px 'Liberation Sans',sans-serif;color:#444746;left:1572.5px;transform:translateX(-50%);">Q</span>
<div class="a" style="left:1617px;top:263px;width:1px;height:23px;background:#c4c7c5;"></div>
<span class="t" style="top:267.60px;font:400 11.5px/13.80px 'Liberation Sans',sans-serif;color:#444746;left:1602.5px;transform:translateX(-50%);">R</span>
<div class="a" style="left:1647px;top:263px;width:1px;height:23px;background:#c4c7c5;"></div>
<span class="t" style="top:267.60px;font:400 11.5px/13.80px 'Liberation Sans',sans-serif;color:#444746;left:1632.5px;transform:translateX(-50%);">S</span>
<div class="a" style="left:1666px;top:263px;width:1px;height:23px;background:#c4c7c5;"></div>
<span class="t" style="top:267.60px;font:400 11.5px/13.80px 'Liberation Sans',sans-serif;color:#444746;left:1657.0px;transform:translateX(-50%);">T</span>
<div class="a" style="left:1727px;top:263px;width:1px;height:23px;background:#c4c7c5;"></div>
<span class="t" style="top:267.60px;font:400 11.5px/13.80px 'Liberation Sans',sans-serif;color:#444746;left:1697.0px;transform:translateX(-50%);">U</span>
<div class="a" style="left:1788px;top:263px;width:1px;height:23px;background:#c4c7c5;"></div>
<span class="t" style="top:267.60px;font:400 11.5px/13.80px 'Liberation Sans',sans-serif;color:#444746;left:1758.0px;transform:translateX(-50%);">V</span>
<div class="a" style="left:1849px;top:263px;width:1px;height:23px;background:#c4c7c5;"></div>
<span class="t" style="top:267.60px;font:400 11.5px/13.80px 'Liberation Sans',sans-serif;color:#444746;left:1819.0px;transform:translateX(-50%);">W</span>
<div class="a" style="left:1908px;top:263px;width:1px;height:23px;background:#c4c7c5;"></div>
<span class="t" style="top:267.60px;font:400 11.5px/13.80px 'Liberation Sans',sans-serif;color:#444746;left:1879.0px;transform:translateX(-50%);">X</span>
<div class="a" style="left:46px;top:286px;width:1863px;height:1px;background:#c4c7c5;"></div>
<div class="a" style="left:41.5px;top:263px;width:4.5px;height:24px;background:#c0c0c0;"></div>
<div class="a" style="left:0px;top:282.5px;width:46px;height:4px;background:#c0c0c0;"></div>
<div class="a" style="left:0px;top:287px;width:46px;height:754px;background:#ffffff;"></div>
<div class="a" style="left:0px;top:287px;width:45px;height:40px;background:#d3e3fd;"></div>
<div class="a" style="left:45px;top:287px;width:1px;height:754px;background:#c4c7c5;"></div>
<div class="a" style="left:0px;top:326px;width:46px;height:1px;background:#c4c7c5;"></div>
<span class="t" style="top:299.60px;font:700 11.5px/13.80px 'Liberation Sans',sans-serif;color:#1f1f1f;left:22.5px;transform:translateX(-50%);">1</span>
<div class="a" style="left:0px;top:346px;width:46px;height:1px;background:#c4c7c5;"></div>
<span class="t" style="top:330.40px;font:400 11px/13.20px 'Liberation Sans',sans-serif;color:#444746;left:22.5px;transform:translateX(-50%);">2</span>
<div class="a" style="left:0px;top:392px;width:46px;height:1px;background:#c4c7c5;"></div>
<span class="t" style="top:362.40px;font:400 11px/13.20px 'Liberation Sans',sans-serif;color:#444746;left:22.5px;transform:translateX(-50%);">3</span>
<div class="a" style="left:0px;top:409px;width:46px;height:1px;background:#c4c7c5;"></div>
<span class="t" style="top:393.90px;font:400 11px/13.20px 'Liberation Sans',sans-serif;color:#444746;left:22.5px;transform:translateX(-50%);">4</span>
<div class="a" style="left:0px;top:421px;width:46px;height:1px;background:#c4c7c5;"></div>
<div class="a" style="left:0px;top:414px;width:45px;height:7px;"><span class="t" style="left:19px;top:0.500px;font:400 11px/13px 'Liberation Sans',sans-serif;color:#444746">5</span></div>
<div class="a" style="left:0px;top:441px;width:46px;height:1px;background:#c4c7c5;"></div>
<span class="t" style="top:424.40px;font:400 11px/13.20px 'Liberation Sans',sans-serif;color:#444746;left:22.5px;transform:translateX(-50%);">6</span>
<div class="a" style="left:0px;top:481px;width:46px;height:1px;background:#c4c7c5;"></div>
<span class="t" style="top:454.40px;font:400 11px/13.20px 'Liberation Sans',sans-serif;color:#444746;left:22.5px;transform:translateX(-50%);">7</span>
<div class="a" style="left:0px;top:514px;width:46px;height:1px;background:#c4c7c5;"></div>
<span class="t" style="top:490.90px;font:400 11px/13.20px 'Liberation Sans',sans-serif;color:#444746;left:22.5px;transform:translateX(-50%);">8</span>
<div class="a" style="left:0px;top:547px;width:46px;height:1px;background:#c4c7c5;"></div>
<span class="t" style="top:523.90px;font:400 11px/13.20px 'Liberation Sans',sans-serif;color:#444746;left:22.5px;transform:translateX(-50%);">9</span>
<div class="a" style="left:0px;top:580px;width:46px;height:1px;background:#c4c7c5;"></div>
<span class="t" style="top:556.90px;font:400 11px/13.20px 'Liberation Sans',sans-serif;color:#444746;left:22.5px;transform:translateX(-50%);">10</span>
<div class="a" style="left:0px;top:613px;width:46px;height:1px;background:#c4c7c5;"></div>
<span class="t" style="top:589.90px;font:400 11px/13.20px 'Liberation Sans',sans-serif;color:#444746;left:22.5px;transform:translateX(-50%);">11</span>
<div class="a" style="left:0px;top:646px;width:46px;height:1px;background:#c4c7c5;"></div>
<span class="t" style="top:622.90px;font:400 11px/13.20px 'Liberation Sans',sans-serif;color:#444746;left:22.5px;transform:translateX(-50%);">12</span>
<div class="a" style="left:0px;top:679px;width:46px;height:1px;background:#c4c7c5;"></div>
<span class="t" style="top:655.90px;font:400 11px/13.20px 'Liberation Sans',sans-serif;color:#444746;left:22.5px;transform:translateX(-50%);">13</span>
<div class="a" style="left:0px;top:712px;width:46px;height:1px;background:#c4c7c5;"></div>
<span class="t" style="top:688.90px;font:400 11px/13.20px 'Liberation Sans',sans-serif;color:#444746;left:22.5px;transform:translateX(-50%);">14</span>
<div class="a" style="left:0px;top:745px;width:46px;height:1px;background:#c4c7c5;"></div>
<span class="t" style="top:721.90px;font:400 11px/13.20px 'Liberation Sans',sans-serif;color:#444746;left:22.5px;transform:translateX(-50%);">15</span>
<div class="a" style="left:0px;top:778px;width:46px;height:1px;background:#c4c7c5;"></div>
<span class="t" style="top:754.90px;font:400 11px/13.20px 'Liberation Sans',sans-serif;color:#444746;left:22.5px;transform:translateX(-50%);">16</span>
<div class="a" style="left:0px;top:811px;width:46px;height:1px;background:#c4c7c5;"></div>
<span class="t" style="top:787.90px;font:400 11px/13.20px 'Liberation Sans',sans-serif;color:#444746;left:22.5px;transform:translateX(-50%);">17</span>
<div class="a" style="left:0px;top:844px;width:46px;height:1px;background:#c4c7c5;"></div>
<span class="t" style="top:820.90px;font:400 11px/13.20px 'Liberation Sans',sans-serif;color:#444746;left:22.5px;transform:translateX(-50%);">18</span>
<div class="a" style="left:0px;top:877px;width:46px;height:1px;background:#c4c7c5;"></div>
<span class="t" style="top:853.90px;font:400 11px/13.20px 'Liberation Sans',sans-serif;color:#444746;left:22.5px;transform:translateX(-50%);">19</span>
<div class="a" style="left:0px;top:910px;width:46px;height:1px;background:#c4c7c5;"></div>
<span class="t" style="top:886.90px;font:400 11px/13.20px 'Liberation Sans',sans-serif;color:#444746;left:22.5px;transform:translateX(-50%);">20</span>
<div class="a" style="left:0px;top:931px;width:46px;height:1px;background:#c4c7c5;"></div>
<span class="t" style="top:913.40px;font:400 11px/13.20px 'Liberation Sans',sans-serif;color:#444746;left:22.5px;transform:translateX(-50%);">21</span>
<div class="a" style="left:0px;top:941px;width:46px;height:1px;background:#c4c7c5;"></div>
<div class="a" style="left:0px;top:932px;width:45px;height:9px;"><span class="t" style="left:16px;top:3px;font:400 11px/13px 'Liberation Sans',sans-serif;color:#444746">22</span></div>
<div class="a" style="left:0px;top:974px;width:46px;height:1px;background:#c4c7c5;"></div>
<span class="t" style="top:950.90px;font:400 11px/13.20px 'Liberation Sans',sans-serif;color:#444746;left:22.5px;transform:translateX(-50%);">23</span>
<div class="a" style="left:0px;top:1007px;width:46px;height:1px;background:#c4c7c5;"></div>
<span class="t" style="top:983.90px;font:400 11px/13.20px 'Liberation Sans',sans-serif;color:#444746;left:22.5px;transform:translateX(-50%);">24</span>
<div class="a" style="left:0px;top:1040px;width:46px;height:1px;background:#c4c7c5;"></div>
<span class="t" style="top:1016.40px;font:400 11px/13.20px 'Liberation Sans',sans-serif;color:#444746;left:22px;transform:translateX(-50%);">25</span>
<div class="a" style="left:46px;top:287px;width:1862px;height:40px;background:#2a9a5a;"></div>
<div class="a" style="left:247px;top:326px;width:13px;height:1.5px;background:#ffffff;"></div>
<div class="a" style="left:46px;top:286px;width:201px;height:41px;border:2px solid #3668dc;"></div>
<svg class="a" style="left:52px;top:289px;" width="120" height="36" viewBox="0 0 120 36"><g fill="none" stroke="#fff" stroke-width="1" stroke-linecap="round">
<path d="M4.500 17.500 H32.800" stroke-width="1.100"/>
<path d="M10.500 7 C10 3.500 14 2 18.600 2 S27 3.500 26.600 7 C27.500 14 23 21 18.600 23.200 C14 21 9.500 14 10.500 7z" fill="#2a9a5a"/>
<circle cx="15.200" cy="8.800" r="2.500"/><circle cx="22.200" cy="8.800" r="2.500"/>
<circle cx="15.200" cy="8.800" r=".8" fill="#fff" stroke="none"/><circle cx="22.200" cy="8.800" r=".8" fill="#fff" stroke="none"/>
<path d="M9 3.200 L12 5 M28.200 3.200 L25.200 5 M17.400 12.500 L18.700 15 L20 12.500 M14.500 18.300 H22.800 M17.200 20.300 V22.300 M20.200 20.300 V22.300" stroke-width=".9"/>
</g>
<path d="M137.500 30.500 H154.500" transform="translate(-49.500 0)" stroke="#fff" stroke-width="1.800"/></svg>
<span class="t" id="t85" style="top:290.80px;font:italic 400 19.5px/23.40px 'Liberation Sans',sans-serif;color:#fff;left:90px;letter-spacing:0.036px;-webkit-text-stroke:0.120px #2a9a5a;">VIZUAL</span>
<span class="t" id="t86" style="top:313.96px;font:400 6.4px/7.68px 'Liberation Sans',sans-serif;color:rgba(255,255,255,.82);left:55px;letter-spacing:-0.222px;">PLANILHAS EMPRESARIAIS</span>
<span class="t" id="t87" style="top:331.40px;font:italic 700 12.5px/15.00px 'Liberation Sans',sans-serif;color:#595959;left:49px;letter-spacing:0.023px;">Versão 6.2 Google</span>
<span class="t" id="t88" style="top:363.10px;font:400 13px/15.60px 'Liberation Sans',sans-serif;color:#000;left:146.0px;transform:translateX(-50%);letter-spacing:-0.040px;">Selecione a Fonte de Receita&gt;</span>
<span class="t" id="t89" style="top:362.50px;font:400 13px/15.60px 'Liberation Sans',sans-serif;color:#000;left:537.5px;transform:translateX(-50%);letter-spacing:0.135px;">Selecione o 1<span style="position:relative">º<i style="position:absolute;left:0.03em;right:0.03em;top:0.640em;height:0.070em;min-height:1px;background:currentColor"></i></span> ano&gt;</span>
<span class="t" id="t90" style="top:362.50px;font:400 13px/15.60px 'Liberation Sans',sans-serif;color:#000;left:923.5px;transform:translateX(-50%);letter-spacing:0.135px;">Selecione o 2<span style="position:relative">º<i style="position:absolute;left:0.03em;right:0.03em;top:0.640em;height:0.070em;min-height:1px;background:currentColor"></i></span> ano&gt;</span>
<div class="a" style="left:259px;top:346px;width:167px;height:47px;background:#f3f3f3;border:1px solid #d9d9d9;"></div>
<span class="t" id="t91" style="top:362.80px;font:400 12.5px/15.00px 'Liberation Sans',sans-serif;color:#000;left:334.0px;transform:translateX(-50%);letter-spacing:-0.462px;">RECEITA_2</span>
<svg class="a" style="left:410px;top:367.5px;" width="8" height="5" viewBox="0 0 8 5"><path d="M0 0 H8 L4 4.500z" fill="#7a7a7a"/></svg>
<div class="a" style="left:649px;top:346px;width:167px;height:47px;background:#f3f3f3;border:1px solid #d9d9d9;"></div>
<span class="t" id="t92" style="top:362.80px;font:400 12.5px/15.00px 'Liberation Sans',sans-serif;color:#000;left:724.0px;transform:translateX(-50%);letter-spacing:0.297px;">2022</span>
<svg class="a" style="left:800px;top:367.5px;" width="8" height="5" viewBox="0 0 8 5"><path d="M0 0 H8 L4 4.500z" fill="#7a7a7a"/></svg>
<div class="a" style="left:1031px;top:346px;width:167px;height:47px;background:#f3f3f3;border:1px solid #d9d9d9;"></div>
<span class="t" id="t93" style="top:362.80px;font:400 12.5px/15.00px 'Liberation Sans',sans-serif;color:#000;left:1106.0px;transform:translateX(-50%);letter-spacing:0.297px;">2023</span>
<svg class="a" style="left:1182px;top:367.5px;" width="8" height="5" viewBox="0 0 8 5"><path d="M0 0 H8 L4 4.500z" fill="#7a7a7a"/></svg>
<div class="a" style="left:0px;top:410px;width:1908px;height:4px;background:#c8c8c8;"></div>
<div class="a" style="left:46px;top:442px;width:200px;height:39px;background:#2a9a5a;"></div>
<span class="t" id="t94" style="top:455.40px;font:700 12.5px/15.00px 'Liberation Sans',sans-serif;color:#fff;left:146.0px;transform:translateX(-50%);letter-spacing:-0.605px;">CADASTRO</span>
<div class="a" style="left:46px;top:482px;width:200px;height:32px;background:#2a9a5a;"></div>
<span class="t" id="t95" style="top:491.90px;font:700 12.5px/15.00px 'Liberation Sans',sans-serif;color:#fff;left:146.0px;transform:translateX(-50%);letter-spacing:-0.227px;">LANÇAMENTOS</span>
<div class="a" style="left:46px;top:515px;width:200px;height:32px;background:#2a9a5a;"></div>
<span class="t" id="t96" style="top:524.90px;font:700 12.5px/15.00px 'Liberation Sans',sans-serif;color:#fff;left:146.0px;transform:translateX(-50%);letter-spacing:-0.603px;">RELATÓRIOS</span>
<div class="a" style="left:46px;top:548px;width:200px;height:32px;background:#2a9a5a;"></div>
<span class="t" id="t97" style="top:557.90px;font:700 12.5px/15.00px 'Liberation Sans',sans-serif;color:#fff;left:146.0px;transform:translateX(-50%);letter-spacing:-0.459px;">DASHBOARDS</span>
<div class="a" style="left:46px;top:779px;width:200px;height:32px;background:#2a9a5a;"></div>
<span class="t" id="t98" style="top:788.90px;font:700 12.5px/15.00px 'Liberation Sans',sans-serif;color:#fff;left:146.0px;transform:translateX(-50%);letter-spacing:-0.312px;">AJUDA</span>
<div class="a" style="left:46px;top:481px;width:200px;height:1px;background:#cfe3d6;"></div>
<div class="a" style="left:46px;top:514px;width:200px;height:1px;background:#cfe3d6;"></div>
<div class="a" style="left:46px;top:547px;width:200px;height:1px;background:#cfe3d6;"></div>
<div class="a" style="left:46px;top:581px;width:200px;height:32px;background:#cccccc;"></div>
<div class="a" style="left:46px;top:614px;width:200px;height:32px;background:#f3f3f3;"></div>
<div class="a" style="left:46px;top:647px;width:200px;height:32px;background:#f3f3f3;"></div>
<div class="a" style="left:46px;top:680px;width:200px;height:32px;background:#f3f3f3;"></div>
<div class="a" style="left:46px;top:713px;width:200px;height:32px;background:#f3f3f3;"></div>
<div class="a" style="left:46px;top:746px;width:200px;height:32px;background:#f3f3f3;"></div>
<div class="a" style="left:46px;top:613px;width:200px;height:1px;background:#dddddd;"></div>
<div class="a" style="left:46px;top:646px;width:200px;height:1px;background:#dddddd;"></div>
<div class="a" style="left:46px;top:679px;width:200px;height:1px;background:#dddddd;"></div>
<div class="a" style="left:46px;top:712px;width:200px;height:1px;background:#dddddd;"></div>
<div class="a" style="left:46px;top:745px;width:200px;height:1px;background:#dddddd;"></div>
<div class="a" style="left:246px;top:581px;width:1px;height:198px;background:#dddddd;"></div>
<div class="a" style="left:50px;top:594.7px;width:7px;height:7px;background:#000;"></div>
<span class="t" id="t99" style="top:589.70px;font:700 13.5px/16.20px 'Liberation Sans',sans-serif;color:#000;left:61px;letter-spacing:-0.631px;">Receitas</span>
<div class="a" style="left:50px;top:627.7px;width:7px;height:7px;background:#000;"></div>
<span class="t" id="t100" style="top:622.70px;font:700 13.5px/16.20px 'Liberation Sans',sans-serif;color:#000;left:61px;letter-spacing:-0.503px;">Anual</span>
<div class="a" style="left:50px;top:660.7px;width:7px;height:7px;background:#000;"></div>
<span class="t" id="t101" style="top:655.70px;font:400 13.5px/16.20px 'Liberation Sans',sans-serif;color:#000;left:61px;letter-spacing:-0.089px;">Mensal</span>
<div class="a" style="left:50px;top:693.7px;width:7px;height:7px;background:#000;"></div>
<span class="t" id="t102" style="top:688.70px;font:400 13.5px/16.20px 'Liberation Sans',sans-serif;color:#000;left:61px;letter-spacing:-0.050px;">Trimestral</span>
<div class="a" style="left:50px;top:726.7px;width:7px;height:7px;background:#000;"></div>
<span class="t" id="t103" style="top:721.70px;font:400 13.5px/16.20px 'Liberation Sans',sans-serif;color:#000;left:61px;letter-spacing:-0.253px;">Semestral</span>
<div class="a" style="left:50px;top:759.7px;width:7px;height:7px;background:#000;"></div>
<span class="t" id="t104" style="top:754.70px;font:400 13.5px/16.20px 'Liberation Sans',sans-serif;color:#000;left:61px;letter-spacing:0.119px;">Mapeamento</span>
<div class="a" style="left:99px;top:623px;width:14.5px;height:14px;background:#3b9df2;border-radius:3px;"></div>
<svg class="a" style="left:99px;top:623px;" width="14.5" height="14" viewBox="0 0 14.5 14"><path d="M11.300 7 H3.800 M6.600 4 L3.600 7 L6.600 10" fill="none" stroke="#fff" stroke-width="1.700"/></svg>
<div class="a" style="left:260px;top:442px;width:165px;height:39px;background:#fff;"></div>
<div class="a" style="left:426px;top:442px;width:179px;height:39px;background:#f3f3f3;"></div>
<div class="a" style="left:606px;top:442px;width:43px;height:39px;background:#fff;"></div>
<div class="a" style="left:650px;top:442px;width:165px;height:39px;background:#f3f3f3;"></div>
<span class="t" id="t105" style="top:455.40px;font:400 12.5px/15.00px 'Liberation Sans',sans-serif;color:#000;left:342.5px;transform:translateX(-50%);letter-spacing:0.092px;">Relação de meses</span>
<span class="t" id="t106" style="top:453.80px;font:700 13.5px/16.20px 'Liberation Sans',sans-serif;color:#000;left:515.5px;transform:translateX(-50%);letter-spacing:-0.036px;">1<span style="position:relative">º<i style="position:absolute;left:0.03em;right:0.03em;top:0.640em;height:0.070em;min-height:1px;background:currentColor"></i></span> ano</span>
<span class="t" style="top:453.80px;font:700 13.5px/16.20px 'Liberation Sans',sans-serif;color:#000;left:627.5px;transform:translateX(-50%);">%</span>
<span class="t" id="t108" style="top:453.80px;font:700 13.5px/16.20px 'Liberation Sans',sans-serif;color:#000;left:732.5px;transform:translateX(-50%);letter-spacing:-0.036px;">2<span style="position:relative">º<i style="position:absolute;left:0.03em;right:0.03em;top:0.640em;height:0.070em;min-height:1px;background:currentColor"></i></span> ano</span>
<div class="a" style="left:260px;top:482px;width:165px;height:32px;background:#f3f3f3;"></div>
<span class="t" id="t109" style="top:491.90px;font:400 12.5px/15.00px 'Liberation Sans',sans-serif;color:#000;left:342.5px;transform:translateX(-50%);letter-spacing:-0.555px;">JANEIRO</span>
<span class="t" style="top:491.90px;font:400 12.5px/15.00px 'Liberation Sans',sans-serif;color:#000;left:515.5px;transform:translateX(-50%);letter-spacing:0.2px;">R$ 3.993,78</span>
<div class="a" style="left:606px;top:482px;width:43px;height:32px;background:#b81b13;"></div>
<span class="t" style="top:491.90px;font:700 12.5px/15.00px 'Liberation Sans',sans-serif;color:#fff;left:627.5px;transform:translateX(-50%);letter-spacing:0.1px;">-2%</span>
<span class="t" style="top:491.90px;font:400 12.5px/15.00px 'Liberation Sans',sans-serif;color:#000;left:732.5px;transform:translateX(-50%);letter-spacing:0.2px;">R$ 3.903,95</span>
<div class="a" style="left:260px;top:515px;width:165px;height:32px;background:#f3f3f3;"></div>
<span class="t" id="t113" style="top:524.90px;font:400 12.5px/15.00px 'Liberation Sans',sans-serif;color:#000;left:342.5px;transform:translateX(-50%);letter-spacing:-0.772px;">FEVEREIRO</span>
<span class="t" style="top:524.90px;font:400 12.5px/15.00px 'Liberation Sans',sans-serif;color:#000;left:515.5px;transform:translateX(-50%);letter-spacing:0.2px;">R$ 4.058,56</span>
<div class="a" style="left:606px;top:515px;width:43px;height:32px;background:#b81b13;"></div>
<span class="t" style="top:524.90px;font:700 12.5px/15.00px 'Liberation Sans',sans-serif;color:#fff;left:627.5px;transform:translateX(-50%);letter-spacing:0.1px;">-3%</span>
<span class="t" style="top:524.90px;font:400 12.5px/15.00px 'Liberation Sans',sans-serif;color:#000;left:732.5px;transform:translateX(-50%);letter-spacing:0.2px;">R$ 3.927,86</span>
<div class="a" style="left:260px;top:548px;width:165px;height:32px;background:#f3f3f3;"></div>
<span class="t" id="t117" style="top:557.90px;font:400 12.5px/15.00px 'Liberation Sans',sans-serif;color:#000;left:342.5px;transform:translateX(-50%);letter-spacing:-0.246px;">MARÇO</span>
<span class="t" style="top:557.90px;font:400 12.5px/15.00px 'Liberation Sans',sans-serif;color:#000;left:515.5px;transform:translateX(-50%);letter-spacing:0.2px;">R$ 4.087,82</span>
<div class="a" style="left:606px;top:548px;width:43px;height:32px;background:#b81b13;"></div>
<span class="t" style="top:557.90px;font:700 12.5px/15.00px 'Liberation Sans',sans-serif;color:#fff;left:627.5px;transform:translateX(-50%);letter-spacing:0.1px;">-5%</span>
<span class="t" style="top:557.90px;font:400 12.5px/15.00px 'Liberation Sans',sans-serif;color:#000;left:732.5px;transform:translateX(-50%);letter-spacing:0.2px;">R$ 3.883,58</span>
<div class="a" style="left:260px;top:581px;width:165px;height:32px;background:#f3f3f3;"></div>
<span class="t" id="t121" style="top:590.90px;font:400 12.5px/15.00px 'Liberation Sans',sans-serif;color:#000;left:342.5px;transform:translateX(-50%);letter-spacing:-0.428px;">ABRIL</span>
<span class="t" style="top:590.90px;font:400 12.5px/15.00px 'Liberation Sans',sans-serif;color:#000;left:515.5px;transform:translateX(-50%);letter-spacing:0.2px;">R$ 5.049,22</span>
<div class="a" style="left:606px;top:581px;width:43px;height:32px;background:#b81b13;"></div>
<span class="t" style="top:590.90px;font:700 12.5px/15.00px 'Liberation Sans',sans-serif;color:#fff;left:627.5px;transform:translateX(-50%);letter-spacing:0.1px;">-1%</span>
<span class="t" style="top:590.90px;font:400 12.5px/15.00px 'Liberation Sans',sans-serif;color:#000;left:732.5px;transform:translateX(-50%);letter-spacing:0.2px;">R$ 4.992,47</span>
<div class="a" style="left:260px;top:614px;width:165px;height:32px;background:#f3f3f3;"></div>
<span class="t" id="t125" style="top:623.90px;font:400 12.5px/15.00px 'Liberation Sans',sans-serif;color:#000;left:342.5px;transform:translateX(-50%);letter-spacing:0.512px;">MAIO</span>
<span class="t" style="top:623.90px;font:400 12.5px/15.00px 'Liberation Sans',sans-serif;color:#000;left:515.5px;transform:translateX(-50%);letter-spacing:0.2px;">R$ 3.936,71</span>
<div class="a" style="left:606px;top:614px;width:43px;height:32px;background:#b81b13;"></div>
<span class="t" style="top:623.90px;font:700 12.5px/15.00px 'Liberation Sans',sans-serif;color:#fff;left:627.5px;transform:translateX(-50%);letter-spacing:0.1px;">-3%</span>
<span class="t" style="top:623.90px;font:400 12.5px/15.00px 'Liberation Sans',sans-serif;color:#000;left:732.5px;transform:translateX(-50%);letter-spacing:0.2px;">R$ 3.802,59</span>
<div class="a" style="left:260px;top:647px;width:165px;height:32px;background:#f3f3f3;"></div>
<span class="t" id="t129" style="top:656.90px;font:400 12.5px/15.00px 'Liberation Sans',sans-serif;color:#000;left:342.5px;transform:translateX(-50%);letter-spacing:-0.212px;">JUNHO</span>
<span class="t" style="top:656.90px;font:400 12.5px/15.00px 'Liberation Sans',sans-serif;color:#000;left:515.5px;transform:translateX(-50%);letter-spacing:0.2px;">R$ 3.936,71</span>
<div class="a" style="left:606px;top:647px;width:43px;height:32px;background:#b81b13;"></div>
<span class="t" style="top:656.90px;font:700 12.5px/15.00px 'Liberation Sans',sans-serif;color:#fff;left:627.5px;transform:translateX(-50%);letter-spacing:0.1px;">-1%</span>
<span class="t" style="top:656.90px;font:400 12.5px/15.00px 'Liberation Sans',sans-serif;color:#000;left:732.5px;transform:translateX(-50%);letter-spacing:0.2px;">R$ 3.899,39</span>
<div class="a" style="left:260px;top:680px;width:165px;height:32px;background:#f3f3f3;"></div>
<span class="t" id="t133" style="top:689.90px;font:400 12.5px/15.00px 'Liberation Sans',sans-serif;color:#000;left:342.5px;transform:translateX(-50%);letter-spacing:-0.337px;">JULHO</span>
<span class="t" style="top:689.90px;font:400 12.5px/15.00px 'Liberation Sans',sans-serif;color:#000;left:515.5px;transform:translateX(-50%);letter-spacing:0.2px;">R$ 3.936,71</span>
<div class="a" style="left:606px;top:680px;width:43px;height:32px;background:#2a9a5a;"></div>
<span class="t" style="top:689.90px;font:700 12.5px/15.00px 'Liberation Sans',sans-serif;color:#fff;left:627.5px;transform:translateX(-50%);letter-spacing:0.1px;">25%</span>
<span class="t" style="top:689.90px;font:400 12.5px/15.00px 'Liberation Sans',sans-serif;color:#000;left:732.5px;transform:translateX(-50%);letter-spacing:0.2px;">R$ 4.937,10</span>
<div class="a" style="left:260px;top:713px;width:165px;height:32px;background:#f3f3f3;"></div>
<span class="t" id="t137" style="top:722.90px;font:400 12.5px/15.00px 'Liberation Sans',sans-serif;color:#000;left:342.5px;transform:translateX(-50%);letter-spacing:-0.494px;">AGOSTO</span>
<span class="t" style="top:722.90px;font:400 12.5px/15.00px 'Liberation Sans',sans-serif;color:#000;left:515.5px;transform:translateX(-50%);letter-spacing:0.2px;">R$ 9.759,07</span>
<div class="a" style="left:606px;top:713px;width:43px;height:32px;background:#2a9a5a;"></div>
<span class="t" style="top:722.90px;font:700 12.5px/15.00px 'Liberation Sans',sans-serif;color:#fff;left:627.5px;transform:translateX(-50%);letter-spacing:0.1px;">11%</span>
<span class="t" style="top:722.90px;font:400 12.5px/15.00px 'Liberation Sans',sans-serif;color:#000;left:732.5px;transform:translateX(-50%);letter-spacing:0.2px;">R$ 10.798,18</span>
<div class="a" style="left:260px;top:746px;width:165px;height:32px;background:#f3f3f3;"></div>
<span class="t" id="t141" style="top:755.90px;font:400 12.5px/15.00px 'Liberation Sans',sans-serif;color:#000;left:342.5px;transform:translateX(-50%);letter-spacing:-0.482px;">SETEMBRO</span>
<span class="t" style="top:755.90px;font:400 12.5px/15.00px 'Liberation Sans',sans-serif;color:#000;left:515.5px;transform:translateX(-50%);letter-spacing:0.2px;">R$ 5.142,28</span>
<div class="a" style="left:606px;top:746px;width:43px;height:32px;background:#b81b13;"></div>
<span class="t" style="top:755.90px;font:700 12.5px/15.00px 'Liberation Sans',sans-serif;color:#fff;left:627.5px;transform:translateX(-50%);letter-spacing:0.1px;">-6%</span>
<span class="t" style="top:755.90px;font:400 12.5px/15.00px 'Liberation Sans',sans-serif;color:#000;left:732.5px;transform:translateX(-50%);letter-spacing:0.2px;">R$ 4.835,09</span>
<div class="a" style="left:260px;top:779px;width:165px;height:32px;background:#f3f3f3;"></div>
<span class="t" id="t145" style="top:788.90px;font:400 12.5px/15.00px 'Liberation Sans',sans-serif;color:#000;left:342.5px;transform:translateX(-50%);letter-spacing:-0.314px;">OUTUBRO</span>
<span class="t" style="top:788.90px;font:400 12.5px/15.00px 'Liberation Sans',sans-serif;color:#000;left:515.5px;transform:translateX(-50%);letter-spacing:0.2px;">R$ 4.848,77</span>
<div class="a" style="left:606px;top:779px;width:43px;height:32px;background:#2a9a5a;"></div>
<span class="t" style="top:788.90px;font:700 12.5px/15.00px 'Liberation Sans',sans-serif;color:#fff;left:627.5px;transform:translateX(-50%);letter-spacing:0.1px;">9%</span>
<span class="t" style="top:788.90px;font:400 12.5px/15.00px 'Liberation Sans',sans-serif;color:#000;left:732.5px;transform:translateX(-50%);letter-spacing:0.2px;">R$ 5.283,05</span>
<div class="a" style="left:260px;top:812px;width:165px;height:32px;background:#f3f3f3;"></div>
<span class="t" id="t149" style="top:821.90px;font:400 12.5px/15.00px 'Liberation Sans',sans-serif;color:#000;left:342.5px;transform:translateX(-50%);letter-spacing:-0.117px;">NOVEMBRO</span>
<span class="t" style="top:821.90px;font:400 12.5px/15.00px 'Liberation Sans',sans-serif;color:#000;left:515.5px;transform:translateX(-50%);letter-spacing:0.2px;">R$ 3.903,95</span>
<div class="a" style="left:606px;top:812px;width:43px;height:32px;background:#2a9a5a;"></div>
<span class="t" style="top:821.90px;font:700 12.5px/15.00px 'Liberation Sans',sans-serif;color:#fff;left:627.5px;transform:translateX(-50%);letter-spacing:-0.35px;">1352%</span>
<span class="t" style="top:821.90px;font:400 12.5px/15.00px 'Liberation Sans',sans-serif;color:#000;left:732.5px;transform:translateX(-50%);letter-spacing:0.2px;">R$ 56.699,34</span>
<div class="a" style="left:260px;top:845px;width:165px;height:32px;background:#f3f3f3;"></div>
<span class="t" id="t153" style="top:854.90px;font:400 12.5px/15.00px 'Liberation Sans',sans-serif;color:#000;left:342.5px;transform:translateX(-50%);letter-spacing:-0.355px;">DEZEMBRO</span>
<span class="t" style="top:854.90px;font:400 12.5px/15.00px 'Liberation Sans',sans-serif;color:#000;left:515.5px;transform:translateX(-50%);letter-spacing:0.2px;">R$ 8.222,43</span>
<div class="a" style="left:606px;top:845px;width:43px;height:32px;background:#b81b13;"></div>
<span class="t" style="top:854.90px;font:700 12.5px/15.00px 'Liberation Sans',sans-serif;color:#fff;left:627.5px;transform:translateX(-50%);letter-spacing:-0.35px;">-100%</span>
<span class="t" style="top:854.90px;font:400 12.5px/15.00px 'Liberation Sans',sans-serif;color:#000;left:732.5px;transform:translateX(-50%);letter-spacing:0.2px;">R$ 0,00</span>
<div class="a" style="left:260px;top:878px;width:165px;height:32px;background:#7030a0;"></div>
<span class="t" style="top:887.90px;font:700 12.5px/15.00px 'Liberation Sans',sans-serif;color:#fff;left:342.5px;transform:translateX(-50%);letter-spacing:0.05px;">MÉDIA MENSAL</span>
<div class="a" style="left:426px;top:878px;width:179px;height:32px;background:#fdf2cf;"></div>
<span class="t" style="top:887.90px;font:700 12.5px/15.00px 'Liberation Sans',sans-serif;color:#000;left:515.5px;transform:translateX(-50%);letter-spacing:0.3px;">R$ 5.073,00</span>
<div class="a" style="left:606px;top:878px;width:43px;height:32px;background:#2a9a5a;"></div>
<span class="t" style="top:887.90px;font:700 12.5px/15.00px 'Liberation Sans',sans-serif;color:#fff;left:627.5px;transform:translateX(-50%);letter-spacing:0.1px;">92%</span>
<div class="a" style="left:650px;top:878px;width:165px;height:32px;background:#fdf2cf;"></div>
<span class="t" style="top:887.90px;font:700 12.5px/15.00px 'Liberation Sans',sans-serif;color:#000;left:732.5px;transform:translateX(-50%);letter-spacing:0.3px;">R$ 9.723,87</span>
<div class="a" style="left:259px;top:441px;width:557px;height:1px;background:#d9d9d9;"></div>
<div class="a" style="left:259px;top:481px;width:557px;height:1px;background:#d9d9d9;"></div>
<div class="a" style="left:259px;top:514px;width:557px;height:1px;background:#d9d9d9;"></div>
<div class="a" style="left:259px;top:547px;width:557px;height:1px;background:#d9d9d9;"></div>
<div class="a" style="left:259px;top:580px;width:557px;height:1px;background:#d9d9d9;"></div>
<div class="a" style="left:259px;top:613px;width:557px;height:1px;background:#d9d9d9;"></div>
<div class="a" style="left:259px;top:646px;width:557px;height:1px;background:#d9d9d9;"></div>
<div class="a" style="left:259px;top:679px;width:557px;height:1px;background:#d9d9d9;"></div>
<div class="a" style="left:259px;top:712px;width:557px;height:1px;background:#d9d9d9;"></div>
<div class="a" style="left:259px;top:745px;width:557px;height:1px;background:#d9d9d9;"></div>
<div class="a" style="left:259px;top:778px;width:557px;height:1px;background:#d9d9d9;"></div>
<div class="a" style="left:259px;top:811px;width:557px;height:1px;background:#d9d9d9;"></div>
<div class="a" style="left:259px;top:844px;width:557px;height:1px;background:#d9d9d9;"></div>
<div class="a" style="left:259px;top:877px;width:557px;height:1px;background:#d9d9d9;"></div>
<div class="a" style="left:259px;top:910px;width:557px;height:1px;background:#d9d9d9;"></div>
<div class="a" style="left:606px;top:514px;width:44px;height:1px;background:#e6c7c4;"></div>
<div class="a" style="left:606px;top:547px;width:44px;height:1px;background:#e6c7c4;"></div>
<div class="a" style="left:606px;top:580px;width:44px;height:1px;background:#e6c7c4;"></div>
<div class="a" style="left:606px;top:613px;width:44px;height:1px;background:#e6c7c4;"></div>
<div class="a" style="left:606px;top:646px;width:44px;height:1px;background:#e6c7c4;"></div>
<div class="a" style="left:606px;top:679px;width:44px;height:1px;background:#d9d9d9;"></div>
<div class="a" style="left:606px;top:712px;width:44px;height:1px;background:#d9d9d9;"></div>
<div class="a" style="left:606px;top:745px;width:44px;height:1px;background:#d9d9d9;"></div>
<div class="a" style="left:606px;top:778px;width:44px;height:1px;background:#d9d9d9;"></div>
<div class="a" style="left:606px;top:811px;width:44px;height:1px;background:#d9d9d9;"></div>
<div class="a" style="left:606px;top:844px;width:44px;height:1px;background:#d9d9d9;"></div>
<div class="a" style="left:606px;top:877px;width:44px;height:1px;background:#e6c7c4;"></div>
<div class="a" style="left:426px;top:441px;width:179px;height:1px;background:#ebebeb;"></div>
<div class="a" style="left:650px;top:441px;width:165px;height:1px;background:#ebebeb;"></div>
<div class="a" style="left:259px;top:441px;width:1px;height:470px;background:#d9d9d9;"></div>
<div class="a" style="left:425px;top:441px;width:1px;height:470px;background:#d9d9d9;"></div>
<div class="a" style="left:605px;top:441px;width:1px;height:470px;background:#d9d9d9;"></div>
<div class="a" style="left:649px;top:441px;width:1px;height:470px;background:#d9d9d9;"></div>
<div class="a" style="left:815px;top:441px;width:1px;height:470px;background:#d9d9d9;"></div>
<div class="a" style="left:260px;top:878px;width:165px;height:33px;background:#7030a0;"></div>
<span class="t" style="top:887.90px;font:700 12.5px/15.00px 'Liberation Sans',sans-serif;color:#fff;left:342.5px;transform:translateX(-50%);letter-spacing:0.05px;">MÉDIA MENSAL</span>
<div class="a" style="left:1001px;top:712px;width:197px;height:34px;background:#f7c12c;"></div>
<span class="t" style="top:722.90px;font:700 12.5px/15.00px 'Liberation Sans',sans-serif;color:#fff;left:1099.5px;transform:translateX(-50%);letter-spacing:0.300px;">R$ 60.876,01</span>
<span class="t" id="t163" style="top:722.40px;font:italic 700 13px/15.60px 'Liberation Sans',sans-serif;color:#000;left:998.5px;transform:translateX(-100%);letter-spacing:0.001px;">Total do 1<span style="position:relative">º<i style="position:absolute;left:0.03em;right:0.03em;top:0.640em;height:0.070em;min-height:1px;background:currentColor"></i></span> ano&gt;</span>
<div class="a" style="left:1001px;top:778px;width:197px;height:34px;background:#3562e3;"></div>
<span class="t" style="top:788.90px;font:700 12.5px/15.00px 'Liberation Sans',sans-serif;color:#fff;left:1099.5px;transform:translateX(-50%);letter-spacing:0.300px;">R$ 106.962,60</span>
<span class="t" id="t165" style="top:788.40px;font:italic 700 13px/15.60px 'Liberation Sans',sans-serif;color:#000;left:998.5px;transform:translateX(-100%);letter-spacing:0.001px;">Total do 2<span style="position:relative">º<i style="position:absolute;left:0.03em;right:0.03em;top:0.640em;height:0.070em;min-height:1px;background:currentColor"></i></span> ano&gt;</span>
<div class="a" style="left:1001px;top:844px;width:197px;height:34px;background:#2a9a5a;"></div>
<span class="t" style="top:854.90px;font:700 12.5px/15.00px 'Liberation Sans',sans-serif;color:#fff;left:1099.5px;transform:translateX(-50%);letter-spacing:0.300px;">76%</span>
<span class="t" id="t167" style="top:854.40px;font:italic 700 13px/15.60px 'Liberation Sans',sans-serif;color:#000;left:998.5px;transform:translateX(-100%);letter-spacing:-0.239px;">Percentual de Crescimento&gt;</span>
<span class="t" id="t168" style="top:915.80px;font:700 12.5px/15.00px 'Liberation Sans',sans-serif;color:#000;left:1433.5px;transform:translateX(-50%);letter-spacing:0.002px;">Encoste o mouse para sair o resultado</span>
<div class="a" style="left:1909px;top:263px;width:11px;height:765px;background:#f8f9fa;border-left:1px solid #e3e3e3;"></div>
<div class="a" style="left:1909px;top:263px;width:11px;height:24px;background:#f8f9fa;border-bottom:1px solid #dcdcdc;border-left:1px solid #e3e3e3;"></div>
<div class="a" style="left:1910.5px;top:415.5px;width:8px;height:25px;background:#dadce0;border-radius:4px;"></div>
<div class="a" style="left:824px;top:442px;width:859px;height:260px;background:#ffffff;border:1px solid #a6a6a6;"></div>
<svg class="a" style="left:0px;top:0px;" width="1920" height="1080" viewBox="0 0 1920 1080"><path d="M886.500 461.500 V606.500 M874.500 461.500 H886.500 M874.500 509.500 H886.500 M874.500 557.500 H886.500 M874.500 606 H886.500" stroke="#000" stroke-width="1" fill="none"/><path d="M909 606.0 V598.4 Q909 596.4 911 596.4 H926 Q928 596.4 928 598.4 V606.0z" fill="#3b5499"/><path d="M930 606.0 V598.6 Q930 596.6 932 596.6 H947 Q949 596.6 949 598.6 V606.0z" fill="#90a6dc"/><path d="M972 606.0 V598.2 Q972 596.2 974 596.2 H989 Q991 596.2 991 598.2 V606.0z" fill="#3b5499"/><path d="M993 606.0 V598.5 Q993 596.5 995 596.5 H1010 Q1012 596.5 1012 598.5 V606.0z" fill="#90a6dc"/><path d="M1036 606.0 V598.2 Q1036 596.2 1038 596.2 H1053 Q1055 596.2 1055 598.2 V606.0z" fill="#3b5499"/><path d="M1057 606.0 V598.6 Q1057 596.6 1059 596.6 H1074 Q1076 596.6 1076 598.6 V606.0z" fill="#90a6dc"/><path d="M1099 606.0 V595.8 Q1099 593.8 1101 593.8 H1116 Q1118 593.8 1118 595.8 V606.0z" fill="#3b5499"/><path d="M1120 606.0 V596.0 Q1120 594.0 1122 594.0 H1137 Q1139 594.0 1139 596.0 V606.0z" fill="#90a6dc"/><path d="M1163 606.0 V598.5 Q1163 596.5 1165 596.5 H1180 Q1182 596.5 1182 598.5 V606.0z" fill="#3b5499"/><path d="M1184 606.0 V598.8 Q1184 596.8 1186 596.8 H1201 Q1203 596.8 1203 598.8 V606.0z" fill="#90a6dc"/><path d="M1226 606.0 V598.5 Q1226 596.5 1228 596.5 H1243 Q1245 596.5 1245 598.5 V606.0z" fill="#3b5499"/><path d="M1247 606.0 V598.6 Q1247 596.6 1249 596.6 H1264 Q1266 596.6 1266 598.6 V606.0z" fill="#90a6dc"/><path d="M1289 606.0 V598.5 Q1289 596.5 1291 596.5 H1306 Q1308 596.5 1308 598.5 V606.0z" fill="#3b5499"/><path d="M1310 606.0 V596.1 Q1310 594.1 1312 594.1 H1327 Q1329 594.1 1329 596.1 V606.0z" fill="#90a6dc"/><path d="M1353 606.0 V584.5 Q1353 582.5 1355 582.5 H1370 Q1372 582.5 1372 584.5 V606.0z" fill="#3b5499"/><path d="M1374 606.0 V582.0 Q1374 580.0 1376 580.0 H1391 Q1393 580.0 1393 582.0 V606.0z" fill="#90a6dc"/><path d="M1416 606.0 V595.6 Q1416 593.6 1418 593.6 H1433 Q1435 593.6 1435 595.6 V606.0z" fill="#3b5499"/><path d="M1437 606.0 V596.4 Q1437 594.4 1439 594.4 H1454 Q1456 594.4 1456 596.4 V606.0z" fill="#90a6dc"/><path d="M1480 606.0 V596.3 Q1480 594.3 1482 594.3 H1497 Q1499 594.3 1499 596.3 V606.0z" fill="#3b5499"/><path d="M1501 606.0 V595.3 Q1501 593.3 1503 593.3 H1518 Q1520 593.3 1520 595.3 V606.0z" fill="#90a6dc"/><path d="M1543 606.0 V598.6 Q1543 596.6 1545 596.6 H1560 Q1562 596.6 1562 598.6 V606.0z" fill="#3b5499"/><path d="M1564 606.0 V471.4 Q1564 469.4 1566 469.4 H1581 Q1583 469.4 1583 471.4 V606.0z" fill="#90a6dc"/><path d="M1606 606.0 V588.2 Q1606 586.2 1608 586.2 H1623 Q1625 586.2 1625 588.2 V606.0z" fill="#3b5499"/></svg>
<span class="t" style="top:455.90px;font:400 11.5px/13.80px 'Liberation Sans',sans-serif;color:#000;left:868.5px;transform:translateX(-100%);letter-spacing:-0.300px;">60000</span>
<span class="t" style="top:503.90px;font:400 11.5px/13.80px 'Liberation Sans',sans-serif;color:#000;left:868.5px;transform:translateX(-100%);letter-spacing:-0.300px;">40000</span>
<span class="t" style="top:551.90px;font:400 11.5px/13.80px 'Liberation Sans',sans-serif;color:#000;left:868.5px;transform:translateX(-100%);letter-spacing:-0.300px;">20000</span>
<span class="t" style="top:599.90px;font:400 11.5px/13.80px 'Liberation Sans',sans-serif;color:#000;left:868.5px;transform:translateX(-100%);letter-spacing:-0.300px;">0</span>
<span class="t" style="top:570.80px;font:700 12.5px/15.00px 'Liberation Serif',serif;color:#3d5a9e;left:918.5px;transform:translateX(-50%);letter-spacing:-0.250px;">R$ 3.993,78</span>
<span class="t" style="top:570.80px;font:700 12.5px/15.00px 'Liberation Serif',serif;color:#3d5a9e;left:981.5px;transform:translateX(-50%);letter-spacing:-0.250px;">R$ 4.058,56</span>
<span class="t" style="top:570.80px;font:700 12.5px/15.00px 'Liberation Serif',serif;color:#3d5a9e;left:1045.5px;transform:translateX(-50%);letter-spacing:-0.250px;">R$ 4.087,82</span>
<span class="t" style="top:568.80px;font:700 12.5px/15.00px 'Liberation Serif',serif;color:#3d5a9e;left:1108.5px;transform:translateX(-50%);letter-spacing:-0.250px;">R$ 5.049,22</span>
<span class="t" style="top:570.80px;font:700 12.5px/15.00px 'Liberation Serif',serif;color:#3d5a9e;left:1172.5px;transform:translateX(-50%);letter-spacing:-0.250px;">R$ 3.936,71</span>
<span class="t" style="top:570.80px;font:700 12.5px/15.00px 'Liberation Serif',serif;color:#3d5a9e;left:1235.5px;transform:translateX(-50%);letter-spacing:-0.250px;">R$ 3.936,71</span>
<span class="t" style="top:570.80px;font:700 12.5px/15.00px 'Liberation Serif',serif;color:#3d5a9e;left:1298.5px;transform:translateX(-50%);letter-spacing:-0.250px;">R$ 3.936,71</span>
<span class="t" style="top:556.80px;font:700 12.5px/15.00px 'Liberation Serif',serif;color:#3d5a9e;left:1362.5px;transform:translateX(-50%);letter-spacing:-0.250px;">R$ 9.759,07</span>
<span class="t" id="t181" style="top:567.20px;font:700 13.5px/16.20px 'Liberation Sans',sans-serif;color:#3d5a9e;left:1385px;letter-spacing:0.594px;">R$ 5.142,2</span>
<span class="t" style="top:568.80px;font:700 12.5px/15.00px 'Liberation Serif',serif;color:#3d5a9e;left:1489.5px;transform:translateX(-50%);letter-spacing:-0.250px;">R$ 4.848,77</span>
<span class="t" style="top:570.80px;font:700 12.5px/15.00px 'Liberation Serif',serif;color:#3d5a9e;left:1552.5px;transform:translateX(-50%);letter-spacing:-0.250px;">R$ 3.903,95</span>
<span class="t" style="top:560.80px;font:700 12.5px/15.00px 'Liberation Serif',serif;color:#3d5a9e;left:1615.5px;transform:translateX(-50%);letter-spacing:-0.250px;">R$ 8.222,43</span>
<span class="t" style="top:587.50px;font:700 12.5px/15.00px 'Liberation Serif',serif;color:#0b0b14;left:939.5px;transform:translateX(-50%);letter-spacing:-0.250px;text-shadow:0 0 2px #8da6dd,0 0 2px #8da6dd,0 0 2px #8da6dd,0 0 1.500px #8da6dd,1px 1px 1px #8da6dd,-1px -1px 1px #8da6dd,1px -1px 1px #8da6dd,-1px 1px 1px #8da6dd;">R$ 3.903,95</span>
<span class="t" style="top:587.50px;font:700 12.5px/15.00px 'Liberation Serif',serif;color:#0b0b14;left:1002.5px;transform:translateX(-50%);letter-spacing:-0.250px;text-shadow:0 0 2px #8da6dd,0 0 2px #8da6dd,0 0 2px #8da6dd,0 0 1.500px #8da6dd,1px 1px 1px #8da6dd,-1px -1px 1px #8da6dd,1px -1px 1px #8da6dd,-1px 1px 1px #8da6dd;">R$ 3.927,86</span>
<span class="t" style="top:587.50px;font:700 12.5px/15.00px 'Liberation Serif',serif;color:#0b0b14;left:1066.5px;transform:translateX(-50%);letter-spacing:-0.250px;text-shadow:0 0 2px #8da6dd,0 0 2px #8da6dd,0 0 2px #8da6dd,0 0 1.500px #8da6dd,1px 1px 1px #8da6dd,-1px -1px 1px #8da6dd,1px -1px 1px #8da6dd,-1px 1px 1px #8da6dd;">R$ 3.883,58</span>
<span class="t" style="top:587.50px;font:700 12.5px/15.00px 'Liberation Serif',serif;color:#0b0b14;left:1129.5px;transform:translateX(-50%);letter-spacing:-0.250px;text-shadow:0 0 2px #8da6dd,0 0 2px #8da6dd,0 0 2px #8da6dd,0 0 1.500px #8da6dd,1px 1px 1px #8da6dd,-1px -1px 1px #8da6dd,1px -1px 1px #8da6dd,-1px 1px 1px #8da6dd;">R$ 4.992,47</span>
<span class="t" style="top:587.50px;font:700 12.5px/15.00px 'Liberation Serif',serif;color:#0b0b14;left:1193.5px;transform:translateX(-50%);letter-spacing:-0.250px;text-shadow:0 0 2px #8da6dd,0 0 2px #8da6dd,0 0 2px #8da6dd,0 0 1.500px #8da6dd,1px 1px 1px #8da6dd,-1px -1px 1px #8da6dd,1px -1px 1px #8da6dd,-1px 1px 1px #8da6dd;">R$ 3.802,59</span>
<span class="t" style="top:587.50px;font:700 12.5px/15.00px 'Liberation Serif',serif;color:#0b0b14;left:1256.5px;transform:translateX(-50%);letter-spacing:-0.250px;text-shadow:0 0 2px #8da6dd,0 0 2px #8da6dd,0 0 2px #8da6dd,0 0 1.500px #8da6dd,1px 1px 1px #8da6dd,-1px -1px 1px #8da6dd,1px -1px 1px #8da6dd,-1px 1px 1px #8da6dd;">R$ 3.899,39</span>
<span class="t" style="top:587.50px;font:700 12.5px/15.00px 'Liberation Serif',serif;color:#0b0b14;left:1319.5px;transform:translateX(-50%);letter-spacing:-0.250px;text-shadow:0 0 2px #8da6dd,0 0 2px #8da6dd,0 0 2px #8da6dd,0 0 1.500px #8da6dd,1px 1px 1px #8da6dd,-1px -1px 1px #8da6dd,1px -1px 1px #8da6dd,-1px 1px 1px #8da6dd;">R$ 4.937,10</span>
<span class="t" style="top:587.50px;font:700 12.5px/15.00px 'Liberation Serif',serif;color:#0b0b14;left:1383.5px;transform:translateX(-50%);letter-spacing:-0.250px;text-shadow:0 0 2px #8da6dd,0 0 2px #8da6dd,0 0 2px #8da6dd,0 0 1.500px #8da6dd,1px 1px 1px #8da6dd,-1px -1px 1px #8da6dd,1px -1px 1px #8da6dd,-1px 1px 1px #8da6dd;">R$ 10.798,18</span>
<span class="t" style="top:587.50px;font:700 12.5px/15.00px 'Liberation Serif',serif;color:#0b0b14;left:1446.5px;transform:translateX(-50%);letter-spacing:-0.250px;text-shadow:0 0 2px #8da6dd,0 0 2px #8da6dd,0 0 2px #8da6dd,0 0 1.500px #8da6dd,1px 1px 1px #8da6dd,-1px -1px 1px #8da6dd,1px -1px 1px #8da6dd,-1px 1px 1px #8da6dd;">R$ 4.835,09</span>
<span class="t" style="top:587.50px;font:700 12.5px/15.00px 'Liberation Serif',serif;color:#0b0b14;left:1510.5px;transform:translateX(-50%);letter-spacing:-0.250px;text-shadow:0 0 2px #8da6dd,0 0 2px #8da6dd,0 0 2px #8da6dd,0 0 1.500px #8da6dd,1px 1px 1px #8da6dd,-1px -1px 1px #8da6dd,1px -1px 1px #8da6dd,-1px 1px 1px #8da6dd;">R$ 5.283,05</span>
<span class="t" style="top:587.50px;font:700 12.5px/15.00px 'Liberation Serif',serif;color:#0b0b14;left:1573.5px;transform:translateX(-50%);letter-spacing:-0.250px;text-shadow:0 0 2px #8da6dd,0 0 2px #8da6dd,0 0 2px #8da6dd,0 0 1.500px #8da6dd,1px 1px 1px #8da6dd,-1px -1px 1px #8da6dd,1px -1px 1px #8da6dd,-1px 1px 1px #8da6dd;">R$ 56.699,34</span>
<span class="t" style="top:587.50px;font:700 12.5px/15.00px 'Liberation Serif',serif;color:#0b0b14;left:1636.5px;transform:translateX(-50%);letter-spacing:-0.250px;text-shadow:0 0 2px #8da6dd,0 0 2px #8da6dd,0 0 2px #8da6dd,0 0 1.500px #8da6dd,1px 1px 1px #8da6dd,-1px -1px 1px #8da6dd,1px -1px 1px #8da6dd,-1px 1px 1px #8da6dd;">R$ 0,00</span>
<span class="t" style="left:736px;top:612px;width:200px;text-align:right;font:700 12.500px/14px 'Liberation Sans',sans-serif;letter-spacing:-0.550px;color:#000;transform-origin:100% 50%;transform:rotate(-45deg);">JANEIRO</span>
<span class="t" style="left:799px;top:612px;width:200px;text-align:right;font:700 12.500px/14px 'Liberation Sans',sans-serif;letter-spacing:-0.550px;color:#000;transform-origin:100% 50%;transform:rotate(-45deg);">FEVEREIRO</span>
<span class="t" style="left:863px;top:612px;width:200px;text-align:right;font:700 12.500px/14px 'Liberation Sans',sans-serif;letter-spacing:-0.550px;color:#000;transform-origin:100% 50%;transform:rotate(-45deg);">MARÇO</span>
<span class="t" style="left:926px;top:612px;width:200px;text-align:right;font:700 12.500px/14px 'Liberation Sans',sans-serif;letter-spacing:-0.550px;color:#000;transform-origin:100% 50%;transform:rotate(-45deg);">ABRIL</span>
<span class="t" style="left:990px;top:612px;width:200px;text-align:right;font:700 12.500px/14px 'Liberation Sans',sans-serif;letter-spacing:-0.550px;color:#000;transform-origin:100% 50%;transform:rotate(-45deg);">MAIO</span>
<span class="t" style="left:1053px;top:612px;width:200px;text-align:right;font:700 12.500px/14px 'Liberation Sans',sans-serif;letter-spacing:-0.550px;color:#000;transform-origin:100% 50%;transform:rotate(-45deg);">JUNHO</span>
<span class="t" style="left:1116px;top:612px;width:200px;text-align:right;font:700 12.500px/14px 'Liberation Sans',sans-serif;letter-spacing:-0.550px;color:#000;transform-origin:100% 50%;transform:rotate(-45deg);">JULHO</span>
<span class="t" style="left:1180px;top:612px;width:200px;text-align:right;font:700 12.500px/14px 'Liberation Sans',sans-serif;letter-spacing:-0.550px;color:#000;transform-origin:100% 50%;transform:rotate(-45deg);">AGOSTO</span>
<span class="t" style="left:1243px;top:612px;width:200px;text-align:right;font:700 12.500px/14px 'Liberation Sans',sans-serif;letter-spacing:-0.550px;color:#000;transform-origin:100% 50%;transform:rotate(-45deg);">SETEMBRO</span>
<span class="t" style="left:1307px;top:612px;width:200px;text-align:right;font:700 12.500px/14px 'Liberation Sans',sans-serif;letter-spacing:-0.550px;color:#000;transform-origin:100% 50%;transform:rotate(-45deg);">OUTUBRO</span>
<span class="t" style="left:1370px;top:612px;width:200px;text-align:right;font:700 12.500px/14px 'Liberation Sans',sans-serif;letter-spacing:-0.550px;color:#000;transform-origin:100% 50%;transform:rotate(-45deg);">NOVEMB...</span>
<span class="t" style="left:1433px;top:612px;width:200px;text-align:right;font:700 12.500px/14px 'Liberation Sans',sans-serif;letter-spacing:-0.550px;color:#000;transform-origin:100% 50%;transform:rotate(-45deg);">DEZEMBRO</span>
<div class="a" style="left:1183px;top:675px;width:12px;height:12px;background:#3b5499;"></div>
<span class="t" id="t197" style="top:674.00px;font:400 12.5px/15.00px 'Liberation Sans',sans-serif;color:#222;left:1203.5px;letter-spacing:-0.068px;">1<span style="position:relative">º<i style="position:absolute;left:0.03em;right:0.03em;top:0.640em;height:0.070em;min-height:1px;background:currentColor"></i></span> ANO</span>
<div class="a" style="left:1261px;top:675px;width:12px;height:12px;background:#90a6dc;"></div>
<span class="t" id="t198" style="top:674.00px;font:400 12.5px/15.00px 'Liberation Sans',sans-serif;color:#222;left:1282px;letter-spacing:-0.068px;">2<span style="position:relative">º<i style="position:absolute;left:0.03em;right:0.03em;top:0.640em;height:0.070em;min-height:1px;background:currentColor"></i></span> ANO</span>
<div class="a" style="left:1236px;top:720px;width:218px;height:188px;background:#ffffff;border:1px solid #a6a6a6;"></div>
<div class="a" style="left:1473px;top:720px;width:212px;height:188px;background:#ffffff;border:1px solid #a6a6a6;"></div>
<svg class="a" style="left:0px;top:0px;" width="1920" height="1080" viewBox="0 0 1920 1080"><path d="M1345 796.75 L1345.00 730.00 A66.75 66.75 0 0 1 1376.41 855.65z" fill="#f7c12c"/><path d="M1345 796.75 L1376.41 855.65 A66.75 66.75 0 0 1 1279.25 785.22z" fill="#b81b13"/><path d="M1345 796.75 L1279.25 785.22 A66.75 66.75 0 0 1 1345.00 730.00z" fill="#2a9a5a"/><path d="M1579.25 796.75 L1579.25 730.25 A66.5 66.5 0 1 1 1513.85 784.68z" fill="#6d2f9f"/><path d="M1579.25 796.75 L1513.85 784.68 A66.5 66.5 0 0 1 1549.96 737.05z" fill="#2e6fbe"/><path d="M1579.25 796.75 L1549.96 737.05 A66.5 66.5 0 0 1 1579.25 730.25z" fill="#b8901c"/><circle cx="1298.750" cy="856.750" r="6" fill="#f7c12c"/><circle cx="1366" cy="857.500" r="6" fill="#b81b13"/><circle cx="1333" cy="873" r="6" fill="#2a9a5a"/><circle cx="1534.250" cy="856.750" r="6" fill="#6d2f9f"/><circle cx="1615" cy="856.750" r="6" fill="#2e6fbe"/><circle cx="1571.250" cy="873" r="6" fill="#b8901c"/></svg>
<span class="t" style="top:853.20px;font:400 8px/9.60px 'Liberation Sans',sans-serif;color:#444;left:1313px;letter-spacing:-0.350px;">AGOSTO</span>
<span class="t" style="top:853.20px;font:400 8px/9.60px 'Liberation Sans',sans-serif;color:#444;left:1380px;letter-spacing:-0.350px;">DEZEMBRO</span>
<span class="t" style="top:869.20px;font:400 8px/9.60px 'Liberation Sans',sans-serif;color:#444;left:1346.75px;letter-spacing:-0.350px;">SETEMBRO</span>
<span class="t" style="top:853.20px;font:400 8px/9.60px 'Liberation Sans',sans-serif;color:#444;left:1548px;letter-spacing:-0.350px;">NOVEMBRO</span>
<span class="t" style="top:853.20px;font:400 8px/9.60px 'Liberation Sans',sans-serif;color:#444;left:1629px;letter-spacing:-0.350px;">AGOSTO</span>
<span class="t" style="top:869.20px;font:400 8px/9.60px 'Liberation Sans',sans-serif;color:#444;left:1585.5px;letter-spacing:-0.350px;">OUTUBRO</span>
<span class="t" id="t205" style="top:702.20px;font:700 15.5px/18.60px 'Liberation Sans',sans-serif;color:#000;left:1241.5px;letter-spacing:0.327px;">top 3 meses no 1<span style="position:relative">º<i style="position:absolute;left:0.03em;right:0.03em;top:0.640em;height:0.070em;min-height:1px;background:currentColor"></i></span></span>
<span class="t" id="t206" style="top:722.20px;font:700 15.5px/18.60px 'Liberation Sans',sans-serif;color:#000;left:1241.5px;letter-spacing:0.312px;">ano</span>
<span class="t" id="t207" style="top:702.20px;font:700 15.5px/18.60px 'Liberation Sans',sans-serif;color:#000;left:1476.5px;letter-spacing:0.327px;">top 3 meses no 2<span style="position:relative">º<i style="position:absolute;left:0.03em;right:0.03em;top:0.640em;height:0.070em;min-height:1px;background:currentColor"></i></span></span>
<span class="t" id="t208" style="top:722.20px;font:700 15.5px/18.60px 'Liberation Sans',sans-serif;color:#000;left:1476.5px;letter-spacing:0.312px;">ano</span>
<div class="a" style="left:253px;top:940px;width:1429px;height:100px;background:#ffffff;border:1px solid #a6a6a6;border-bottom:none;"></div>
<span class="t" id="t209" style="top:954.90px;font:700 21px/25.20px 'Liberation Sans',sans-serif;color:#000;left:967px;transform:translateX(-50%);letter-spacing:-0.357px;">Gráfico de Crescimento dessa Receita</span>
<span class="t" style="top:988.90px;font:400 11px/13.20px 'Liberation Sans',sans-serif;color:#000;left:268px;letter-spacing:-0.100px;">125000</span>
<span class="t" style="top:1019.90px;font:400 11px/13.20px 'Liberation Sans',sans-serif;color:#000;left:268px;letter-spacing:-0.100px;">100000</span>
<span class="t" id="t212" style="top:990.80px;font:700 12px/14.40px 'Liberation Sans',sans-serif;color:#2a9a5a;left:781px;letter-spacing:0.251px;">R$ 106.962,60</span>
<div class="a" style="left:801px;top:1019px;width:43px;height:12px;background:#2a9a5a;border-radius:2px 2px 0 0;"></div>
<div class="a" style="left:0px;top:1028px;width:1920px;height:13px;background:#ffffff;border-top:1px solid #e1e1e1;"></div>
<div class="a" style="left:0px;top:1028px;width:46px;height:13px;background:#ffffff;border-top:1px solid #e1e1e1;"></div>
<div class="a" style="left:48px;top:1030.5px;width:290px;height:8px;background:#dadce0;border-radius:4px;"></div>
<div class="a" style="left:1877px;top:1028px;width:16px;height:12px;background:#f8f9fa;border-left:1px solid #e1e1e1;"></div>
<div class="a" style="left:1893px;top:1028px;width:16px;height:12px;background:#f8f9fa;border-left:1px solid #e1e1e1;border-right:1px solid #e1e1e1;"></div>
<svg class="a" style="left:1883px;top:1031.5px;" width="4" height="6" viewBox="0 0 4 6"><path d="M4 0 V6 L0 3z" fill="#8a8a8a"/></svg>
<svg class="a" style="left:1900px;top:1031.5px;" width="4" height="6" viewBox="0 0 4 6"><path d="M0 0 V6 L4 3z" fill="#8a8a8a"/></svg>
<div class="a" style="left:1909px;top:996px;width:11px;height:16px;background:#f8f9fa;border:1px solid #e1e1e1;border-right:none;"></div>
<div class="a" style="left:1909px;top:1012px;width:11px;height:16px;background:#f8f9fa;border:1px solid #e1e1e1;border-right:none;border-top:none;"></div>
<svg class="a" style="left:1912px;top:1001px;" width="6" height="4" viewBox="0 0 6 4"><path d="M0 4 H6 L3 0z" fill="#8a8a8a"/></svg>
<svg class="a" style="left:1912px;top:1018px;" width="6" height="4" viewBox="0 0 6 4"><path d="M0 0 H6 L3 4z" fill="#8a8a8a"/></svg>
<div class="a" style="left:1909px;top:1028px;width:11px;height:13px;background:#f8f9fa;"></div>
<div class="a" style="left:0px;top:1041px;width:1920px;height:37px;background:#f9fbfd;border-top:1px solid #e1e3e6;"></div>
<div class="a" style="left:0px;top:1078px;width:1920px;height:2px;background:#000000;"></div>
<svg class="a" style="left:52.0px;top:1051.0px;" width="18" height="18" viewBox="0 0 24 24"><path d="M19 13h-6v6h-2v-6H5v-2h6V5h2v6h6v2z" fill="#444746" /></svg>
<svg class="a" style="left:92.0px;top:1051.0px;" width="18" height="18" viewBox="0 0 24 24"><path d="M3 18h18v-2H3v2zm0-5h18v-2H3v2zm0-7v2h18V6H3z" fill="#444746" /></svg>
<div class="a" style="left:125px;top:1049px;width:1px;height:22px;background:#c7c7c7;"></div>
<div class="a" style="left:128px;top:1075px;width:1374px;height:3px;background:#bfdcac;"></div>
<span class="t" id="t213" style="top:1052.60px;font:400 14px/16.80px 'Liberation Sans',sans-serif;color:#444746;left:140px;letter-spacing:-0.128px;">LAN_REC_5</span>
<svg class="a" style="left:229.5px;top:1058.5px;" width="9" height="5" viewBox="0 0 9 5"><path d="M0 0 H9 L4.500 5z" fill="#444746"/></svg>
<span class="t" id="t214" style="top:1052.60px;font:400 14px/16.80px 'Liberation Sans',sans-serif;color:#444746;left:264px;letter-spacing:-0.128px;">LAN_REC_6</span>
<svg class="a" style="left:353.5px;top:1058.5px;" width="9" height="5" viewBox="0 0 9 5"><path d="M0 0 H9 L4.500 5z" fill="#444746"/></svg>
<div class="a" style="left:251px;top:1075px;width:1.5px;height:3px;background:#f9fbfd;"></div>
<span class="t" id="t215" style="top:1052.60px;font:400 14px/16.80px 'Liberation Sans',sans-serif;color:#444746;left:388px;letter-spacing:-0.128px;">LAN_REC_7</span>
<svg class="a" style="left:477.5px;top:1058.5px;" width="9" height="5" viewBox="0 0 9 5"><path d="M0 0 H9 L4.500 5z" fill="#444746"/></svg>
<div class="a" style="left:375px;top:1075px;width:1.5px;height:3px;background:#f9fbfd;"></div>
<span class="t" id="t216" style="top:1052.60px;font:400 14px/16.80px 'Liberation Sans',sans-serif;color:#444746;left:512px;letter-spacing:-0.128px;">LAN_REC_8</span>
<svg class="a" style="left:601.5px;top:1058.5px;" width="9" height="5" viewBox="0 0 9 5"><path d="M0 0 H9 L4.500 5z" fill="#444746"/></svg>
<div class="a" style="left:499px;top:1075px;width:1.5px;height:3px;background:#f9fbfd;"></div>
<span class="t" id="t217" style="top:1052.60px;font:400 14px/16.80px 'Liberation Sans',sans-serif;color:#444746;left:636px;letter-spacing:-0.128px;">LAN_REC_9</span>
<svg class="a" style="left:725.5px;top:1058.5px;" width="9" height="5" viewBox="0 0 9 5"><path d="M0 0 H9 L4.500 5z" fill="#444746"/></svg>
<div class="a" style="left:623px;top:1075px;width:1.5px;height:3px;background:#f9fbfd;"></div>
<span class="t" id="t218" style="top:1052.60px;font:400 14px/16.80px 'Liberation Sans',sans-serif;color:#444746;left:760px;letter-spacing:-0.194px;">LAN_REC_10</span>
<svg class="a" style="left:856.5px;top:1058.5px;" width="9" height="5" viewBox="0 0 9 5"><path d="M0 0 H9 L4.500 5z" fill="#444746"/></svg>
<div class="a" style="left:747px;top:1075px;width:1.5px;height:3px;background:#f9fbfd;"></div>
<span class="t" id="t219" style="top:1052.60px;font:400 14px/16.80px 'Liberation Sans',sans-serif;color:#444746;left:891px;letter-spacing:-0.291px;">LAN_REC_11</span>
<svg class="a" style="left:985.5px;top:1058.5px;" width="9" height="5" viewBox="0 0 9 5"><path d="M0 0 H9 L4.500 5z" fill="#444746"/></svg>
<div class="a" style="left:878px;top:1075px;width:1.5px;height:3px;background:#f9fbfd;"></div>
<span class="t" id="t220" style="top:1052.60px;font:400 14px/16.80px 'Liberation Sans',sans-serif;color:#444746;left:1019px;letter-spacing:-0.294px;">LAN_REC_12</span>
<svg class="a" style="left:1115.5px;top:1058.5px;" width="9" height="5" viewBox="0 0 9 5"><path d="M0 0 H9 L4.500 5z" fill="#444746"/></svg>
<div class="a" style="left:1006px;top:1075px;width:1.5px;height:3px;background:#f9fbfd;"></div>
<span class="t" id="t221" style="top:1052.60px;font:400 14px/16.80px 'Liberation Sans',sans-serif;color:#444746;left:1149px;letter-spacing:-0.294px;">LAN_REC_13</span>
<svg class="a" style="left:1244.5px;top:1058.5px;" width="9" height="5" viewBox="0 0 9 5"><path d="M0 0 H9 L4.500 5z" fill="#444746"/></svg>
<div class="a" style="left:1136px;top:1075px;width:1.5px;height:3px;background:#f9fbfd;"></div>
<span class="t" id="t222" style="top:1052.60px;font:400 14px/16.80px 'Liberation Sans',sans-serif;color:#444746;left:1278px;letter-spacing:-0.194px;">LAN_REC_14</span>
<svg class="a" style="left:1374.5px;top:1058.5px;" width="9" height="5" viewBox="0 0 9 5"><path d="M0 0 H9 L4.500 5z" fill="#444746"/></svg>
<div class="a" style="left:1265px;top:1075px;width:1.5px;height:3px;background:#f9fbfd;"></div>
<span class="t" id="t223" style="top:1052.60px;font:400 14px/16.80px 'Liberation Sans',sans-serif;color:#444746;left:1409px;letter-spacing:-0.513px;">REL_REC</span>
<svg class="a" style="left:1480.5px;top:1058.5px;" width="9" height="5" viewBox="0 0 9 5"><path d="M0 0 H9 L4.500 5z" fill="#444746"/></svg>
<div class="a" style="left:1396px;top:1075px;width:1.5px;height:3px;background:#f9fbfd;"></div>
<div class="a" style="left:1502px;top:1042px;width:90px;height:36px;background:#e1e9f7;"></div>
<span class="t" id="t224" style="top:1052.60px;font:700 14px/16.80px 'Liberation Sans',sans-serif;color:#3559c7;left:1514px;letter-spacing:-0.094px;">DASH1</span>
<svg class="a" style="left:1571.5px;top:1058.5px;" width="9" height="5" viewBox="0 0 9 5"><path d="M0 0 H9 L4.500 5z" fill="#3559c7"/></svg>
<span class="t" id="t225" style="top:1052.60px;font:400 14px/16.80px 'Liberation Sans',sans-serif;color:#444746;left:1604px;letter-spacing:0.062px;">DASH2</span>
<svg class="a" style="left:1661.5px;top:1058.5px;" width="9" height="5" viewBox="0 0 9 5"><path d="M0 0 H9 L4.500 5z" fill="#444746"/></svg>
<div class="a" style="left:1688px;top:1050px;width:1px;height:20px;background:#c7c7c7;"></div>
<svg class="a" style="left:1701.0px;top:1051.0px;" width="20" height="20" viewBox="0 0 24 24"><path d="M15.410 7.410L14 6l-6 6 6 6 1.410-1.410L10.830 12z" fill="#444746" /></svg>
<svg class="a" style="left:1740.0px;top:1051.0px;" width="20" height="20" viewBox="0 0 24 24"><path d="M10 6L8.590 7.410 13.170 12l-4.580 4.590L10 18l6-6z" fill="#444746" /></svg>
<svg class="a" style="left:1882.0px;top:1052.0px;" width="20" height="20" viewBox="0 0 24 24"><path d="M15.410 7.410L14 6l-6 6 6 6 1.410-1.410L10.830 12z" fill="#444746" /></svg>
</body></html>
